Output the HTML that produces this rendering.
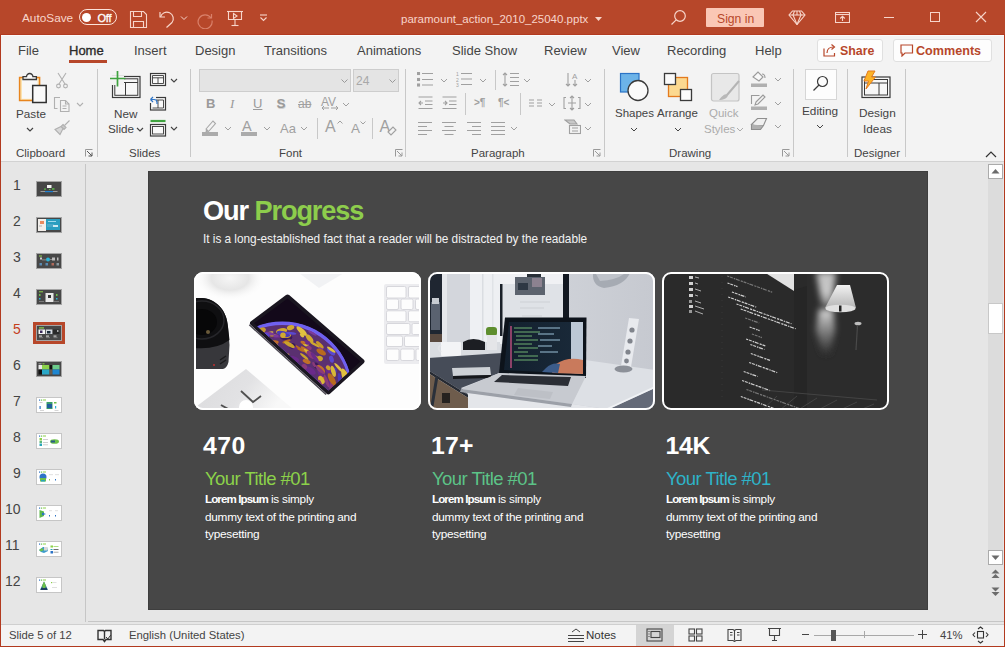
<!DOCTYPE html>
<html><head><meta charset="utf-8">
<style>
*{margin:0;padding:0;box-sizing:border-box}
html,body{width:1005px;height:647px;overflow:hidden;background:#E6E6E6;font-family:"Liberation Sans",sans-serif}
.a{position:absolute}
.t{position:absolute;white-space:nowrap;line-height:1}
#title{left:0;top:0;width:1005px;height:35px;background:#B7472A;border-bottom:1px solid #B23A1F}
#tabs{left:1px;top:35px;width:1003px;height:127px;background:#F3F3F3;border-top:1px solid #FBFBFB}
#ribline{left:1px;top:161px;width:1003px;height:1px;background:#D2D2D2}
.bl{left:0;top:34px;width:1px;height:613px;background:#B23A1F}
.br{left:1004px;top:34px;width:1px;height:613px;background:#B23A1F}
.bb{left:0;top:646px;width:1005px;height:1px;background:#B23A1F}
.tab{font-size:13px;color:#444;top:44px}
.grp{font-size:11.5px;color:#444;top:148px}
.lbl{font-size:12px;color:#444}
.sep{width:1px;background:#C8C8C8;top:69px;height:88px}
.num{font-size:14px;color:#444;left:0;width:22px;text-align:center}
.th{left:37px;width:25px;height:15px;border:1px solid #BDBDBD;background:#fff}
</style></head><body>
<div class="a" id="title"></div>
<div class="a" id="tabs"></div>
<div class="a" id="ribline"></div>


<!-- tabs -->
<div class="t tab" style="left:18px">File</div>
<div class="t tab" style="left:69px;color:#2B2B2B;-webkit-text-stroke:0.35px #2B2B2B">Home</div>
<div class="a" style="left:69px;top:60px;width:38px;height:3px;background:#B7472A"></div>
<div class="t tab" style="left:134px">Insert</div>
<div class="t tab" style="left:195px">Design</div>
<div class="t tab" style="left:264px">Transitions</div>
<div class="t tab" style="left:357px">Animations</div>
<div class="t tab" style="left:452px">Slide Show</div>
<div class="t tab" style="left:544px">Review</div>
<div class="t tab" style="left:612px">View</div>
<div class="t tab" style="left:667px">Recording</div>
<div class="t tab" style="left:755px">Help</div>
<div class="a" style="left:817px;top:39px;width:66px;height:23px;background:#FDFDFD;border:1px solid #E0E0E0;border-radius:3px"></div>
<svg class="a" style="left:823px;top:43px" width="14" height="14" viewBox="0 0 14 14" fill="none" stroke="#B7472A" stroke-width="1.2">
 <path d="M1 5.5v7.5h10.5v-3"/><path d="M4 10c0-4 3-6 6.5-6"/><path d="M8.5 1.5l3 2.5-3 2.5"/>
</svg>
<div class="t" style="left:840px;top:45px;font-size:12.4px;font-weight:bold;color:#B7472A">Share</div>
<div class="a" style="left:893px;top:39px;width:99px;height:23px;background:#FDFDFD;border:1px solid #E0E0E0;border-radius:3px"></div>
<svg class="a" style="left:900px;top:44px" width="14" height="13" viewBox="0 0 14 13" fill="none" stroke="#B7472A" stroke-width="1.2">
 <path d="M1 1h11.5v8h-7.5l-3 3v-3h-1z"/>
</svg>
<div class="t" style="left:916px;top:45px;font-size:12.6px;font-weight:bold;color:#B7472A">Comments</div>


<!-- ribbon -->
<!-- Clipboard -->
<svg class="a" style="left:17px;top:71px" width="32" height="34" viewBox="0 0 32 34">
 <rect x="2.6" y="6.5" width="20" height="23" fill="#FBE3B1" stroke="#E8851E" stroke-width="1.5"/>
 <rect x="5" y="8.2" width="15.6" height="19.6" fill="#F8F8F8"/>
 <path d="M6 8.5v-2.8h3.5a3.2 3.2 0 0 1 6.4 0h3.5v2.8z" fill="#FAFAFA" stroke="#3A3A3A" stroke-width="1.3"/>
 <rect x="15.7" y="14.5" width="13.5" height="17" fill="#FAFAFA" stroke="#303030" stroke-width="1.5"/>
</svg>
<div class="t lbl" style="left:16px;top:108px;font-size:11.7px">Paste</div>
<svg class="a" style="left:26px;top:127px" width="8" height="5" viewBox="0 0 8 5" fill="none" stroke="#444" stroke-width="1.2"><path d="M1 1l3 3 3-3"/></svg>
<svg class="a" style="left:56px;top:72px" width="12" height="17" viewBox="0 0 12 17" fill="none" stroke="#B0B0B0" stroke-width="1.1">
 <path d="M2 1l7 11M10 1L3 12"/><circle cx="2.5" cy="14" r="1.9"/><circle cx="9.5" cy="14" r="1.9"/>
</svg>
<svg class="a" style="left:53px;top:95px" width="18" height="18" viewBox="0 0 18 18" fill="none" stroke="#B0B0B0" stroke-width="1.1">
 <path d="M7 2.5H4.5l-3 0v11h3"/><path d="M7.5 5.5h5l3.5 3.5v7.5h-8.5z"/><path d="M12.5 5.5v3.5h3.5"/><path d="M9.5 11h4M9.5 13.5h4"/>
</svg>
<svg class="a" style="left:76px;top:102px" width="8" height="5" viewBox="0 0 8 5" fill="none" stroke="#B0B0B0" stroke-width="1.1"><path d="M1 1l3 3 3-3"/></svg>
<svg class="a" style="left:54px;top:119px" width="17" height="17" viewBox="0 0 17 17" fill="none" stroke="#B0B0B0" stroke-width="1.1">
 <path d="M15.5 1.5l-5 5"/><path d="M9 5.5l3 3-2 2-3-3z" fill="#C8C8C8"/><path d="M7 7.5L1 10.5l5 5 3-6z" fill="#D8D8D8"/>
</svg>
<div class="t grp" style="left:16px">Clipboard</div>
<svg class="a" style="left:85px;top:149px" width="8" height="8" viewBox="0 0 8 8" fill="none" stroke="#555" stroke-width="1"><path d="M0.5 7.5V0.5M0.5 0.5H7.5" stroke="#999"/><path d="M2 2l5 5M3.5 7H7V3.5"/></svg>
<div class="a sep" style="left:97px"></div>

<!-- Slides -->
<svg class="a" style="left:109px;top:70px" width="34" height="30" viewBox="0 0 34 30">
 <rect x="3.5" y="6.5" width="27.5" height="21" fill="#F7F7F7" stroke="#3A3A3A" stroke-width="1.2"/>
 <rect x="5.8" y="8.8" width="23" height="16.5" fill="none" stroke="#3A3A3A" stroke-width="1"/>
 <path d="M5.8 12.5h23M16.5 12.5v12.8" stroke="#3A3A3A" stroke-width="1"/>
 <rect x="1" y="6" width="14" height="9" fill="#F3F3F3"/>
 <path d="M8.5 1v15.5M1 8.5h15.5" stroke="#3FA33F" stroke-width="1.7"/>
</svg>
<div class="t lbl" style="left:114px;top:108px;font-size:11.7px">New</div>
<div class="t lbl" style="left:108px;top:123px;font-size:11.7px">Slide</div>
<svg class="a" style="left:136px;top:127px" width="8" height="5" viewBox="0 0 8 5" fill="none" stroke="#444" stroke-width="1.2"><path d="M1 1l3 3 3-3"/></svg>
<svg class="a" style="left:149px;top:72px" width="18" height="15" viewBox="0 0 18 15" fill="none" stroke="#3A3A3A" stroke-width="1.2">
 <rect x="1.5" y="1.5" width="15" height="12" fill="#FAFAFA"/><path d="M3.5 3.5h11v8h-11zM3.5 5.8h11M9 5.8v5.7" stroke-width="0.9"/>
</svg>
<svg class="a" style="left:170px;top:78px" width="8" height="5" viewBox="0 0 8 5" fill="none" stroke="#444" stroke-width="1.1"><path d="M1 1l3 3 3-3"/></svg>
<svg class="a" style="left:149px;top:95px" width="18" height="16" viewBox="0 0 18 16" fill="none" stroke="#3A3A3A" stroke-width="1.2">
 <rect x="1.5" y="2.5" width="15" height="12.5" fill="#FAFAFA"/><path d="M3.5 5h11M3.5 13h11M9 5v8M14.5 5v8" stroke-width="0.9"/>
 <rect x="0" y="0" width="7" height="8" fill="#F3F3F3" stroke="none"/>
 <path d="M1.5 4.5l2.5-2.5M1.5 4.5l2.5 2.5M1.5 4.5H5a3 3 0 0 1 3 3v1.5" stroke="#2E75C8" stroke-width="1.2"/>
</svg>
<svg class="a" style="left:149px;top:119px" width="18" height="18" viewBox="0 0 18 18" fill="none" stroke="#3A3A3A" stroke-width="1.2">
 <path d="M1.5 2h15" stroke="#3FA33F" stroke-width="2.2"/>
 <rect x="1.5" y="5.5" width="15" height="11.5" fill="#FAFAFA"/><rect x="3.5" y="7.5" width="11" height="7.5" stroke-width="0.9"/>
</svg>
<svg class="a" style="left:170px;top:126px" width="8" height="5" viewBox="0 0 8 5" fill="none" stroke="#444" stroke-width="1.1"><path d="M1 1l3 3 3-3"/></svg>
<div class="t grp" style="left:129px">Slides</div>
<div class="a sep" style="left:190px"></div>

<!-- Font -->
<div class="a" style="left:199px;top:69px;width:152px;height:23px;background:#E4E4E4;border:1px solid #CDCDCD"></div>
<svg class="a" style="left:341px;top:79px" width="7" height="5" viewBox="0 0 7 5" fill="none" stroke="#999" stroke-width="1"><path d="M0.5 0.5l3 3 3-3"/></svg>
<div class="a" style="left:353px;top:69px;width:46px;height:23px;background:#E4E4E4;border:1px solid #CDCDCD"></div>
<div class="t" style="left:356px;top:75px;font-size:12px;color:#A8A8A8">24</div>
<svg class="a" style="left:389px;top:79px" width="7" height="5" viewBox="0 0 7 5" fill="none" stroke="#999" stroke-width="1"><path d="M0.5 0.5l3 3 3-3"/></svg>
<div class="t" style="left:206px;top:97px;font-size:13px;font-weight:bold;color:#9A9A9A">B</div>
<div class="t" style="left:230px;top:97px;font-size:13px;font-style:italic;color:#9A9A9A;font-family:'Liberation Serif'">I</div>
<div class="t" style="left:253px;top:97px;font-size:13px;color:#9A9A9A;text-decoration:underline">U</div>
<div class="t" style="left:276.5px;top:97px;font-size:13.5px;font-weight:bold;color:#9A9A9A;text-shadow:0.6px 1px 0 #CFCFCF">S</div>
<div class="t" style="left:298px;top:98px;font-size:12px;color:#A0A0A0;text-decoration:line-through">ab</div>
<div class="t" style="left:321px;top:95.5px;font-size:12px;color:#A0A0A0">AV</div>
<svg class="a" style="left:321px;top:105px" width="18" height="6" viewBox="0 0 18 6" fill="none" stroke="#A0A0A0" stroke-width="1"><path d="M1 3h7M3 1L1 3l2 2M10 3h7M15 1l2 2-2 2"/></svg>
<svg class="a" style="left:342px;top:102px" width="8" height="5" viewBox="0 0 8 5" fill="none" stroke="#A0A0A0" stroke-width="1"><path d="M1 1l3 3 3-3"/></svg>
<svg class="a" style="left:201px;top:118px" width="18" height="19" viewBox="0 0 18 19">
 <path d="M5 11l7-8 2.5 2.5-7 8z" fill="none" stroke="#A8A8A8" stroke-width="1.1"/><path d="M5 11l2.5 2.5-3 1z" fill="#A8A8A8"/>
 <rect x="1" y="14" width="16" height="4" fill="#ABABAB"/>
</svg>
<svg class="a" style="left:224px;top:126px" width="8" height="5" viewBox="0 0 8 5" fill="none" stroke="#A0A0A0" stroke-width="1"><path d="M1 1l3 3 3-3"/></svg>
<div class="t" style="left:242px;top:118.5px;font-size:14.5px;color:#A0A0A0">A</div>
<div class="a" style="left:241px;top:132px;width:16px;height:4px;background:#ABABAB"></div>
<svg class="a" style="left:263px;top:126px" width="8" height="5" viewBox="0 0 8 5" fill="none" stroke="#A0A0A0" stroke-width="1"><path d="M1 1l3 3 3-3"/></svg>
<div class="t" style="left:280px;top:121.5px;font-size:13px;color:#A0A0A0">Aa</div>
<svg class="a" style="left:300px;top:126px" width="8" height="5" viewBox="0 0 8 5" fill="none" stroke="#A0A0A0" stroke-width="1"><path d="M1 1l3 3 3-3"/></svg>
<div class="a" style="left:317px;top:118px;width:1px;height:21px;background:#C8C8C8"></div>
<div class="t" style="left:325px;top:119px;font-size:16px;color:#A0A0A0">A</div>
<svg class="a" style="left:337px;top:120px" width="6" height="4" viewBox="0 0 6 4" fill="none" stroke="#A0A0A0" stroke-width="1"><path d="M0.5 3.5l2.5-2.5 2.5 2.5"/></svg>
<div class="t" style="left:351px;top:121.5px;font-size:13.5px;color:#A0A0A0">A</div>
<svg class="a" style="left:360px;top:120.5px" width="6" height="4" viewBox="0 0 6 4" fill="none" stroke="#A0A0A0" stroke-width="1"><path d="M0.5 0.5l2.5 2.5 2.5-2.5"/></svg>
<div class="a" style="left:372px;top:118px;width:1px;height:21px;background:#C8C8C8"></div>
<div class="t" style="left:379.5px;top:119px;font-size:16px;color:#A0A0A0">A</div>
<svg class="a" style="left:387px;top:126px" width="10" height="10" viewBox="0 0 10 10" fill="#F3F3F3" stroke="#A0A0A0" stroke-width="1.1"><path d="M1 6l5-5 3 3-5 5z"/></svg>
<div class="t grp" style="left:279px">Font</div>
<svg class="a" style="left:395px;top:149px" width="8" height="8" viewBox="0 0 8 8" fill="none" stroke="#999" stroke-width="1"><path d="M0.5 7.5V0.5M0.5 0.5H7.5"/><path d="M2 2l5 5M3.5 7H7V3.5"/></svg>
<div class="a sep" style="left:405px"></div>

<!-- Paragraph -->
<svg class="a" style="left:417px;top:72px" width="17" height="15" viewBox="0 0 17 15" fill="none" stroke="#A0A0A0" stroke-width="1.1"><rect x="0.5" y="0.5" width="2" height="2" fill="#A0A0A0"/><rect x="0.5" y="6.5" width="2" height="2" fill="#A0A0A0"/><rect x="0.5" y="12" width="2" height="2" fill="#A0A0A0"/><path d="M5 1.5h11M5 7.5h11M5 13h11"/></svg>
<svg class="a" style="left:440px;top:78px" width="8" height="5" viewBox="0 0 8 5" fill="none" stroke="#A0A0A0" stroke-width="1"><path d="M1 1l3 3 3-3"/></svg>
<svg class="a" style="left:456px;top:71px" width="17" height="16" viewBox="0 0 17 16" fill="none" stroke="#A0A0A0" stroke-width="1.1"><path d="M5 2.5h11M5 8h11M5 13.5h11"/><text x="0" y="5" font-size="5" fill="#A0A0A0" stroke="none" font-family="Liberation Sans">1</text><text x="0" y="10.5" font-size="5" fill="#A0A0A0" stroke="none" font-family="Liberation Sans">2</text><text x="0" y="16" font-size="5" fill="#A0A0A0" stroke="none" font-family="Liberation Sans">3</text></svg>
<svg class="a" style="left:479px;top:78px" width="8" height="5" viewBox="0 0 8 5" fill="none" stroke="#A0A0A0" stroke-width="1"><path d="M1 1l3 3 3-3"/></svg>
<div class="a" style="left:495px;top:70px;width:1px;height:20px;background:#C8C8C8"></div>
<svg class="a" style="left:502px;top:72px" width="18" height="15" viewBox="0 0 18 15" fill="none" stroke="#A0A0A0" stroke-width="1.1"><path d="M3 1v13M1 3l2-2 2 2M1 12l2 2 2-2M8 1.5h9M8 5.5h9M8 9.5h9M8 13.5h9"/></svg>
<svg class="a" style="left:523px;top:78px" width="8" height="5" viewBox="0 0 8 5" fill="none" stroke="#A0A0A0" stroke-width="1"><path d="M1 1l3 3 3-3"/></svg>
<svg class="a" style="left:565px;top:71px" width="15" height="16" viewBox="0 0 15 16" fill="none" stroke="#A0A0A0" stroke-width="1.1"><path d="M3 2v13M1 13l2 2 2-2M10 9v6M8 13l2 2 2-2"/><text x="7" y="7.5" font-size="8" fill="#A0A0A0" stroke="none" font-family="Liberation Sans">A</text></svg>
<svg class="a" style="left:584px;top:78px" width="8" height="5" viewBox="0 0 8 5" fill="none" stroke="#A0A0A0" stroke-width="1"><path d="M1 1l3 3 3-3"/></svg>
<svg class="a" style="left:418px;top:96px" width="15" height="14" viewBox="0 0 15 14" fill="none" stroke="#A0A0A0" stroke-width="1.1"><path d="M0.5 1h14M7 5h7.5M7 8.5h7.5M0.5 12.5h14M5 7H1M3 5L1 7l2 2"/></svg>
<svg class="a" style="left:442px;top:96px" width="15" height="14" viewBox="0 0 15 14" fill="none" stroke="#A0A0A0" stroke-width="1.1"><path d="M0.5 1h14M7 5h7.5M7 8.5h7.5M0.5 12.5h14M1 7h4M3 5l2 2-2 2"/></svg>
<div class="a" style="left:465px;top:93px;width:1px;height:22px;background:#C8C8C8"></div>
<div class="t" style="left:474px;top:98px;font-size:10px;color:#A0A0A0;font-weight:bold">&gt;&para;</div>
<div class="t" style="left:498px;top:98px;font-size:10px;color:#A0A0A0;font-weight:bold">&para;&lt;</div>
<div class="a" style="left:520px;top:93px;width:1px;height:22px;background:#C8C8C8"></div>
<svg class="a" style="left:529px;top:99px" width="14" height="8" viewBox="0 0 14 8" fill="none" stroke="#A0A0A0" stroke-width="1.1"><path d="M0 1h5M0 4h5M0 7h5M8 1h5M8 4h5M8 7h5"/></svg>
<svg class="a" style="left:548px;top:102px" width="8" height="5" viewBox="0 0 8 5" fill="none" stroke="#A0A0A0" stroke-width="1"><path d="M1 1l3 3 3-3"/></svg>
<svg class="a" style="left:563px;top:95px" width="18" height="16" viewBox="0 0 18 16" fill="none" stroke="#A0A0A0" stroke-width="1.1"><path d="M3 2.5H1v11h2M15 2.5h2v11h-2M9 1v14M7 3l2-2 2 2M7 13l2 2 2-2M5 8h8"/></svg>
<svg class="a" style="left:584px;top:102px" width="8" height="5" viewBox="0 0 8 5" fill="none" stroke="#A0A0A0" stroke-width="1"><path d="M1 1l3 3 3-3"/></svg>
<svg class="a" style="left:418px;top:121px" width="15" height="15" viewBox="0 0 15 15" fill="none" stroke="#A0A0A0" stroke-width="1.1"><path d="M0 1.5H14M0 5.5H9M0 9.5H14M0 13.5H9"/></svg>
<svg class="a" style="left:442px;top:121px" width="15" height="15" viewBox="0 0 15 15" fill="none" stroke="#A0A0A0" stroke-width="1.1"><path d="M0 1.5H14M2.5 5.5H11.5M0 9.5H14M2.5 13.5H11.5"/></svg>
<svg class="a" style="left:467px;top:121px" width="15" height="15" viewBox="0 0 15 15" fill="none" stroke="#A0A0A0" stroke-width="1.1"><path d="M0 1.5H14M5 5.5H14M0 9.5H14M5 13.5H14"/></svg>
<svg class="a" style="left:491px;top:121px" width="15" height="15" viewBox="0 0 15 15" fill="none" stroke="#A0A0A0" stroke-width="1.1"><path d="M0 1.5H14M0 5.5H14M0 9.5H14M0 13.5H14"/></svg>
<svg class="a" style="left:510px;top:126px" width="8" height="5" viewBox="0 0 8 5" fill="none" stroke="#A0A0A0" stroke-width="1"><path d="M1 1l3 3 3-3"/></svg>
<svg class="a" style="left:564px;top:119px" width="17" height="16" viewBox="0 0 17 16" fill="none" stroke="#A0A0A0" stroke-width="1.1"><path d="M1 1h9l3 4H6z" fill="#C8C8C8"/><rect x="5.5" y="6.5" width="11" height="8" fill="#F3F3F3"/><path d="M8 9h6M8 12h6"/></svg>
<svg class="a" style="left:584px;top:126px" width="8" height="5" viewBox="0 0 8 5" fill="none" stroke="#A0A0A0" stroke-width="1"><path d="M1 1l3 3 3-3"/></svg>
<div class="t grp" style="left:471px">Paragraph</div>
<svg class="a" style="left:593px;top:149px" width="8" height="8" viewBox="0 0 8 8" fill="none" stroke="#999" stroke-width="1"><path d="M0.5 7.5V0.5M0.5 0.5H7.5"/><path d="M2 2l5 5M3.5 7H7V3.5"/></svg>
<div class="a sep" style="left:604px"></div>
<!-- Drawing -->
<svg class="a" style="left:618px;top:71px" width="34" height="32" viewBox="0 0 34 32"><rect x="2.5" y="2.5" width="18.5" height="18.5" fill="#6CB3E8" stroke="#2B73C6" stroke-width="1.2"/><circle cx="20" cy="19.5" r="10" fill="#FAFAFA" stroke="#3A3A3A" stroke-width="1.3"/></svg>
<div class="t lbl" style="left:615px;top:108px;font-size:11.5px">Shapes</div>
<svg class="a" style="left:630px;top:127px" width="8" height="5" viewBox="0 0 8 5" fill="none" stroke="#444" stroke-width="1"><path d="M1 1l3 3 3-3"/></svg>
<svg class="a" style="left:662px;top:71px" width="32" height="32" viewBox="0 0 32 32"><rect x="6.5" y="6.5" width="19" height="19" fill="#FCD990" stroke="#E47A1E" stroke-width="1.3"/><rect x="2.5" y="2.5" width="11" height="11" fill="#FAFAFA" stroke="#3A3A3A" stroke-width="1.3"/><rect x="18.5" y="18.5" width="11" height="11" fill="#FAFAFA" stroke="#3A3A3A" stroke-width="1.3"/></svg>
<div class="t lbl" style="left:657px;top:108px;font-size:11.5px">Arrange</div>
<svg class="a" style="left:674px;top:127px" width="8" height="5" viewBox="0 0 8 5" fill="none" stroke="#444" stroke-width="1"><path d="M1 1l3 3 3-3"/></svg>
<svg class="a" style="left:709px;top:71px" width="34" height="32" viewBox="0 0 34 32"><rect x="2.5" y="2.5" width="27.5" height="27.5" rx="2" fill="#E8E8E8" stroke="#C4C4C4" stroke-width="1.2"/><path d="M30 10L18 24" stroke="#B4B4B4" stroke-width="2"/><path d="M18 23c-3 0-6 3-8 6 4 0 9-2 9-5z" fill="#B8B8B8"/></svg>
<div class="t lbl" style="left:709px;top:108px;font-size:11.5px;color:#ABABAB">Quick</div>
<div class="t lbl" style="left:704px;top:124px;font-size:11.5px;color:#ABABAB">Styles</div>
<svg class="a" style="left:736px;top:127px" width="8" height="5" viewBox="0 0 8 5" fill="none" stroke="#ABABAB" stroke-width="1"><path d="M1 1l3 3 3-3"/></svg>
<svg class="a" style="left:750px;top:70px" width="18" height="18" viewBox="0 0 18 18" fill="none" stroke="#9A9A9A" stroke-width="1.1"><path d="M3 7l5-5 5 5-4 4z" fill="#F8F8F8"/><path d="M12 4c2 0 3 2 3 4"/><rect x="1" y="13.5" width="16" height="3.5" fill="#B0B0B0" stroke="none"/></svg>
<svg class="a" style="left:774px;top:77px" width="8" height="5" viewBox="0 0 8 5" fill="none" stroke="#A0A0A0" stroke-width="1"><path d="M1 1l3 3 3-3"/></svg>
<svg class="a" style="left:750px;top:93px" width="18" height="18" viewBox="0 0 18 18" fill="none" stroke="#9A9A9A" stroke-width="1.1"><path d="M1.5 11V2.5h8"/><path d="M6 9l7-7 2 2-7 7-3 1z"/><rect x="1" y="13.5" width="16" height="3.5" fill="#B0B0B0" stroke="none"/></svg>
<svg class="a" style="left:774px;top:101px" width="8" height="5" viewBox="0 0 8 5" fill="none" stroke="#A0A0A0" stroke-width="1"><path d="M1 1l3 3 3-3"/></svg>
<svg class="a" style="left:750px;top:117px" width="18" height="15" viewBox="0 0 18 15" fill="none" stroke="#8E8E8E" stroke-width="1.1"><path d="M1.5 7.5l6-6h9l-3 7h-9z" fill="#F0F0F0"/><path d="M1.5 7.5v5h9l3-4" fill="#B0B0B0"/></svg>
<svg class="a" style="left:774px;top:124px" width="8" height="5" viewBox="0 0 8 5" fill="none" stroke="#A0A0A0" stroke-width="1"><path d="M1 1l3 3 3-3"/></svg>
<div class="t grp" style="left:669px">Drawing</div>
<svg class="a" style="left:782px;top:149px" width="8" height="8" viewBox="0 0 8 8" fill="none" stroke="#999" stroke-width="1"><path d="M0.5 7.5V0.5M0.5 0.5H7.5"/><path d="M2 2l5 5M3.5 7H7V3.5"/></svg>
<div class="a sep" style="left:793px"></div>
<!-- Editing -->
<div class="a" style="left:805px;top:69px;width:32px;height:31px;background:#FDFDFD;border:1px solid #D6D6D6"></div>
<svg class="a" style="left:812px;top:75px" width="18" height="18" viewBox="0 0 18 18" fill="none" stroke="#3A3A3A" stroke-width="1.2"><circle cx="10.5" cy="6.5" r="5"/><path d="M7 10l-5.5 5.5"/></svg>
<div class="t lbl" style="left:802px;top:106px;font-size:11.8px">Editing</div>
<svg class="a" style="left:816px;top:124px" width="8" height="5" viewBox="0 0 8 5" fill="none" stroke="#444" stroke-width="1"><path d="M1 1l3 3 3-3"/></svg>
<div class="a sep" style="left:847px"></div>
<svg class="a" style="left:859px;top:70px" width="34" height="30" viewBox="0 0 34 30"><rect x="3" y="7" width="28" height="20.5" fill="#F7F7F7" stroke="#3A3A3A" stroke-width="1.2"/><rect x="5.5" y="9.5" width="23" height="15.5" fill="none" stroke="#3A3A3A" stroke-width="1"/><path d="M5.5 13h23M20 13v12" stroke="#3A3A3A" stroke-width="1"/><path d="M9 1h7l-3.5 6h4L7 19l2.5-8H5z" fill="#FCB326" stroke="#E47A1E" stroke-width="1"/></svg>
<div class="t lbl" style="left:859px;top:108px;font-size:11.8px">Design</div>
<div class="t lbl" style="left:863px;top:124px;font-size:11.8px">Ideas</div>
<div class="t grp" style="left:854px">Designer</div>
<div class="a sep" style="left:905px"></div>
<svg class="a" style="left:985px;top:151px" width="12" height="7" viewBox="0 0 12 7" fill="none" stroke="#333" stroke-width="1.2"><path d="M1 6l5-5 5 5"/></svg>

<!-- title bar content -->
<div class="t" style="left:22px;top:12.8px;font-size:11.8px;color:#F7D5CA">AutoSave</div>
<div class="a" style="left:79px;top:9px;width:38px;height:16px;border:1.3px solid #FBE3DB;border-radius:8px"></div>
<div class="a" style="left:82px;top:12.5px;width:9px;height:9px;border-radius:50%;background:#fff"></div>
<div class="t" style="left:97.5px;top:13px;font-size:11px;color:#fff;letter-spacing:-0.2px;-webkit-text-stroke:0.3px #fff">Off</div>
<svg class="a" style="left:129px;top:10px" width="19" height="19" viewBox="0 0 19 19" fill="none" stroke="#F7D5CA" stroke-width="1.1">
 <path d="M1.5 1.5h13l3 3v13h-16z"/><path d="M4.5 1.5v5h8v-5"/><path d="M4.5 17.5v-6h10v6"/>
</svg>
<svg class="a" style="left:158px;top:10px" width="30" height="19" viewBox="0 0 30 19" fill="none" stroke="#F7D5CA" stroke-width="1.2">
 <path d="M2 2v5h5"/><path d="M2.5 7A6.5 6.5 0 1 1 14 12.5L8.5 17.5"/><path d="M23 6.5l3 3 3-3" stroke-width="1"/>
</svg>
<svg class="a" style="left:196px;top:11px" width="19" height="18" viewBox="0 0 19 18" fill="none" stroke="#D9806A" stroke-width="1.2">
 <path d="M15.5 3v4h-4"/><path d="M15 7A7 7 0 1 0 16 9.5"/>
</svg>
<svg class="a" style="left:226px;top:10px" width="18" height="17" viewBox="0 0 18 17" fill="none" stroke="#F7D5CA" stroke-width="1.1">
 <path d="M1 1.5h16"/><path d="M2.5 1.5v8h13v-8"/><path d="M9 9.5v6"/><path d="M5.5 15.5h7"/><path d="M7.5 3.5l3.5 2.5-3.5 2.5z"/>
</svg>
<svg class="a" style="left:259px;top:13px" width="9" height="9" viewBox="0 0 9 9" fill="none" stroke="#F7D5CA" stroke-width="1.1">
 <path d="M1 2h7"/><path d="M1.5 4.5l3 3 3-3"/>
</svg>
<div class="t" style="left:401px;top:13.5px;font-size:11.5px;color:#F7D5CA">paramount_action_2010_25040.pptx</div>
<svg class="a" style="left:595px;top:17px" width="7" height="5" viewBox="0 0 7 5"><path d="M0 0h7l-3.5 4z" fill="#F7D5CA"/></svg>
<svg class="a" style="left:670px;top:9px" width="17" height="17" viewBox="0 0 17 17" fill="none" stroke="#F7D5CA" stroke-width="1.2">
 <circle cx="10" cy="7" r="5.3"/><path d="M6.2 10.8L1.5 15.5"/>
</svg>
<div class="a" style="left:706px;top:8px;width:58px;height:19px;background:#FAC7B5;border-radius:1px"></div>
<div class="t" style="left:717px;top:13px;font-size:12.2px;color:#B7472A">Sign in</div>
<svg class="a" style="left:788px;top:10px" width="18" height="15" viewBox="0 0 18 15" fill="none" stroke="#F7D5CA" stroke-width="1.1">
 <path d="M4.5 1h9l3.5 4-8 9.5-8-9.5z"/><path d="M1 5h16"/><path d="M6.5 1l-1.5 4 4 9.5 4-9.5-1.5-4"/><path d="M9 1v4"/>
</svg>
<svg class="a" style="left:835px;top:12px" width="15" height="11" viewBox="0 0 15 11" fill="none" stroke="#F7D5CA" stroke-width="1.1">
 <path d="M0.5 0.5h14v10h-14z"/><path d="M0.5 2.5h14"/><path d="M7.5 9V4.5M5.2 6.5l2.3-2.2 2.3 2.2"/>
</svg>
<div class="a" style="left:884px;top:17px;width:10px;height:1px;background:#F7D5CA"></div>
<div class="a" style="left:930px;top:12px;width:10px;height:10px;border:1px solid #F7D5CA"></div>
<svg class="a" style="left:975px;top:11px" width="12" height="12" viewBox="0 0 12 12" fill="none" stroke="#F7D5CA" stroke-width="1.1">
 <path d="M1 1l10 10M11 1L1 11"/>
</svg>


<!-- status bar -->
<div class="a" style="left:1px;top:624px;width:1003px;height:1px;background:#CFCFCF"></div>
<div class="a" style="left:1px;top:625px;width:1003px;height:21px;background:#F3F3F3"></div>

<!-- main -->
<div class="a" style="left:85px;top:164px;width:1px;height:458px;background:#C6C6C6"></div>
<div class="a" style="left:88px;top:621px;width:916px;height:1px;background:#C6C6C6"></div>
<div class="t" style="left:13px;top:178.0px;font-size:14px;color:#444">1</div>
<div class="t" style="left:13px;top:214.0px;font-size:14px;color:#444">2</div>
<div class="t" style="left:13px;top:250.0px;font-size:14px;color:#444">3</div>
<div class="t" style="left:13px;top:286.0px;font-size:14px;color:#444">4</div>
<div class="t" style="left:13px;top:322.0px;font-size:14px;color:#C43E1C">5</div>
<div class="t" style="left:13px;top:358.0px;font-size:14px;color:#444">6</div>
<div class="t" style="left:13px;top:394.0px;font-size:14px;color:#444">7</div>
<div class="t" style="left:13px;top:430.0px;font-size:14px;color:#444">8</div>
<div class="t" style="left:13px;top:466.0px;font-size:14px;color:#444">9</div>
<div class="t" style="left:5px;top:502.0px;font-size:14px;color:#444">10</div>
<div class="t" style="left:5px;top:538.0px;font-size:14px;color:#444">11</div>
<div class="t" style="left:5px;top:574.0px;font-size:14px;color:#444">12</div>
<svg class="a" style="left:37px;top:182px;outline:1px solid #A4A4A4;outline-offset:0" width="24" height="14" viewBox="0 0 24 14"><rect width="24" height="14" fill="#474747"/><rect x="10" y="3" width="4.5" height="3" fill="#F4F4F4"/><rect x="7" y="6.5" width="2" height="1.2" fill="#5DB94A"/><rect x="12" y="7" width="1.5" height="1" fill="#5DB94A"/><rect x="15" y="6.2" width="2.5" height="1.5" fill="#5DB94A"/><rect x="3.5" y="9" width="17" height="1" fill="#9A9A9A"/><rect x="8" y="9" width="8" height="1.2" fill="#1E7FD0"/></svg>
<svg class="a" style="left:37px;top:218px;outline:1px solid #A4A4A4;outline-offset:0" width="24" height="14" viewBox="0 0 24 14"><rect width="24" height="14" fill="#474747"/><rect x="1" y="1" width="8" height="12" fill="#F2EEEA"/><rect x="3" y="3" width="4" height="3" fill="#E88A60"/><rect x="2" y="7" width="3" height="2" fill="#D0D0D0"/><rect x="9" y="1" width="14" height="11" fill="#2A9EC0"/><rect x="11" y="3" width="8" height="1" fill="#9FD8EA"/><rect x="10" y="6" width="7" height="3" fill="#4AA8C8"/><rect x="16" y="7" width="5" height="2" fill="#CDEAF2"/></svg>
<svg class="a" style="left:37px;top:254px;outline:1px solid #A4A4A4;outline-offset:0" width="24" height="14" viewBox="0 0 24 14"><rect width="24" height="14" fill="#474747"/><rect x="2" y="1.5" width="3" height="1" fill="#8CD24A"/><rect x="3" y="3.5" width="2" height="2" fill="#CCC"/><rect x="5" y="5.5" width="4" height="0.8" fill="#999"/><circle cx="11" cy="5.5" r="2" fill="#2BB3D6"/><rect x="13" y="5.2" width="4" height="0.8" fill="#999"/><rect x="15" y="3.5" width="3" height="3" fill="#BBB"/><rect x="20" y="3.5" width="1.5" height="3" fill="#BBB"/><rect x="2.5" y="9" width="2.5" height="2.5" fill="#5A8AB0"/><rect x="8.5" y="9" width="2.5" height="2.5" fill="#5A8AB0"/><rect x="14.5" y="9" width="2.5" height="2.5" fill="#B06A5A"/><rect x="19.5" y="9" width="2.5" height="2.5" fill="#8A9AA0"/></svg>
<svg class="a" style="left:37px;top:290px;outline:1px solid #A4A4A4;outline-offset:0" width="24" height="14" viewBox="0 0 24 14"><rect width="24" height="14" fill="#474747"/><rect x="2" y="1.3" width="4" height="1" fill="#8CD24A"/><rect x="8.5" y="3" width="8" height="9" fill="#E8E8E8"/><rect x="11" y="5" width="3" height="3" fill="#333"/><rect x="2" y="4" width="1.5" height="2" fill="#6CC04A"/><rect x="2" y="8" width="1.5" height="1.5" fill="#2BB3D6"/><rect x="19" y="4" width="1.5" height="2" fill="#6CC04A"/><rect x="19" y="8" width="1.5" height="1.5" fill="#2BB3D6"/><rect x="2" y="11" width="5" height="0.8" fill="#888"/><rect x="17" y="11" width="5" height="0.8" fill="#888"/></svg>
<div class="a" style="left:33px;top:322px;width:32px;height:22px;border:3px solid #B7472A;background:#FAFAFA"></div>
<svg class="a" style="left:37px;top:326px;outline:1px solid #A4A4A4;outline-offset:0" width="24" height="14" viewBox="0 0 24 14"><rect width="24" height="14" fill="#474747"/><rect x="2" y="1.3" width="5" height="1.2" fill="#8CD24A"/><rect x="1.5" y="3.5" width="6.5" height="4.5" fill="#F6F6F6"/><rect x="3" y="4.5" width="2.5" height="2.5" fill="#3A2A5A"/><rect x="8.8" y="3.5" width="6.5" height="4.5" fill="#D4D8DE"/><rect x="10" y="5" width="3.5" height="2.5" fill="#1A2A3A"/><rect x="16" y="3.5" width="6.5" height="4.5" fill="#2A2A2A"/><rect x="20" y="4" width="1.5" height="2" fill="#AAA"/><rect x="2" y="9.5" width="3" height="1.2" fill="#CCC"/><rect x="9" y="9.5" width="3" height="1.2" fill="#CCC"/><rect x="16.5" y="9.5" width="3" height="1.2" fill="#CCC"/><rect x="2" y="11.3" width="4" height="0.8" fill="#888"/><rect x="9" y="11.3" width="4" height="0.8" fill="#888"/><rect x="16.5" y="11.3" width="4" height="0.8" fill="#888"/></svg>
<svg class="a" style="left:37px;top:362px;outline:1px solid #A4A4A4;outline-offset:0" width="24" height="14" viewBox="0 0 24 14"><rect width="24" height="14" fill="#474747"/><rect x="1.5" y="1.3" width="3" height="1" fill="#AAA"/><rect x="5.5" y="1.3" width="2" height="1" fill="#8CD24A"/><rect x="1.5" y="3" width="3.5" height="4.5" fill="#E8E8E8"/><rect x="5" y="3" width="7.5" height="4.5" fill="#8CD24A"/><rect x="12.5" y="3" width="3" height="4.5" fill="#111"/><rect x="15.5" y="3" width="7" height="4.5" fill="#6CCB8A"/><rect x="1.5" y="7.5" width="3.5" height="5" fill="#111"/><rect x="5" y="7.5" width="7.5" height="5" fill="#2AA8C8"/><rect x="12.5" y="7.5" width="3" height="5" fill="#6A5A4A"/><rect x="15.5" y="7.5" width="7" height="5" fill="#1E86D0"/></svg>
<svg class="a" style="left:37px;top:398px;outline:1px solid #C6C6C6;outline-offset:0" width="24" height="14" viewBox="0 0 24 14"><rect width="24" height="14" fill="#FFFFFF"/><rect x="2" y="1.5" width="1.2" height="1.2" fill="#2B73C6"/><rect x="4" y="1.5" width="1.2" height="1.2" fill="#6CC04A"/><rect x="6" y="1.5" width="3" height="1" fill="#8CD24A"/><rect x="2.5" y="4" width="3" height="1" fill="#CCC"/><rect x="2.5" y="8" width="1.2" height="3" fill="#2B73C6"/><rect x="3" y="12" width="4" height="0.6" fill="#BBB"/><rect x="9.5" y="4" width="6" height="7" fill="#3A9E6A"/><rect x="10" y="6" width="5" height="4" fill="#1F5E9E"/><rect x="17" y="4" width="2.5" height="1.5" fill="#6CC04A"/><rect x="18" y="8" width="1.2" height="2.5" fill="#2BB3D6"/><rect x="17.5" y="12" width="4" height="0.6" fill="#BBB"/></svg>
<svg class="a" style="left:37px;top:434px;outline:1px solid #C6C6C6;outline-offset:0" width="24" height="14" viewBox="0 0 24 14"><rect width="24" height="14" fill="#FFFFFF"/><rect x="2" y="1.5" width="1.2" height="1.2" fill="#2B73C6"/><rect x="4" y="1.5" width="1.2" height="1.2" fill="#6CC04A"/><rect x="6" y="1.5" width="3" height="1" fill="#8CD24A"/><rect x="2.5" y="4" width="2.5" height="2.5" fill="#8CD24A"/><rect x="2.5" y="7" width="2.5" height="2" fill="#5CB77B"/><rect x="2.5" y="9.5" width="2.5" height="2.5" fill="#2AA5B9"/><rect x="6" y="5" width="5" height="0.7" fill="#BBB"/><rect x="6" y="8" width="5" height="0.7" fill="#BBB"/><rect x="6" y="10.5" width="5" height="0.7" fill="#BBB"/><ellipse cx="17.5" cy="7.5" rx="4.5" ry="2.3" fill="#6CC04A"/><rect x="14" y="6.5" width="4" height="2" fill="#2A5A8A"/></svg>
<svg class="a" style="left:37px;top:470px;outline:1px solid #C6C6C6;outline-offset:0" width="24" height="14" viewBox="0 0 24 14"><rect width="24" height="14" fill="#FFFFFF"/><rect x="2" y="1.5" width="1.2" height="1.2" fill="#2B73C6"/><rect x="4" y="1.5" width="1.2" height="1.2" fill="#6CC04A"/><rect x="6" y="1.5" width="3" height="1" fill="#8CD24A"/><circle cx="6" cy="7" r="3.5" fill="#2B73C6"/><rect x="3" y="8" width="6" height="3.5" fill="#6CC04A"/><rect x="4" y="10" width="4" height="1.5" fill="#2AA5B9"/><rect x="12" y="4.5" width="4" height="0.6" fill="#CCC"/><rect x="18" y="4.5" width="4" height="0.6" fill="#CCC"/><rect x="12" y="9" width="1" height="1.5" fill="#8CD24A"/><rect x="18" y="9" width="1" height="1.5" fill="#2B73C6"/></svg>
<svg class="a" style="left:37px;top:506px;outline:1px solid #C6C6C6;outline-offset:0" width="24" height="14" viewBox="0 0 24 14"><rect width="24" height="14" fill="#FFFFFF"/><rect x="2" y="1.5" width="1.2" height="1.2" fill="#2B73C6"/><rect x="4" y="1.5" width="1.2" height="1.2" fill="#6CC04A"/><rect x="6" y="1.5" width="3" height="1" fill="#8CD24A"/><path d="M2.5 4 L7 5.5 L7 10 L2.5 12 Z" fill="#5DB94A"/><path d="M5 6.5 L9 8 L5 9.5 Z" fill="#2B73C6"/><rect x="12" y="4.5" width="3" height="0.6" fill="#CCC"/><rect x="18" y="4.5" width="3" height="0.6" fill="#CCC"/><rect x="12" y="9" width="1" height="1.5" fill="#2B73C6"/><rect x="18" y="9" width="1" height="1.5" fill="#2B73C6"/></svg>
<svg class="a" style="left:37px;top:542px;outline:1px solid #C6C6C6;outline-offset:0" width="24" height="14" viewBox="0 0 24 14"><rect width="24" height="14" fill="#FFFFFF"/><rect x="2" y="1.5" width="1.2" height="1.2" fill="#2B73C6"/><rect x="4" y="1.5" width="1.2" height="1.2" fill="#6CC04A"/><rect x="6" y="1.5" width="3" height="1" fill="#8CD24A"/><path d="M2 8 L6 5 L10 5 L11 9 L7 11 L4 10 Z" fill="#3C9BCB"/><path d="M2 8 L5 6 L7 8 L4 9.5Z" fill="#6CC04A"/><rect x="7" y="5" width="3.5" height="3.5" fill="#D8D8D8"/><rect x="13.5" y="3.5" width="2.5" height="2" fill="#8CD24A"/><rect x="16.5" y="4" width="5" height="0.7" fill="#8CD24A"/><rect x="13.5" y="7" width="2" height="1" fill="#2AA5B9"/><rect x="16.5" y="7.3" width="5" height="0.7" fill="#333"/><rect x="13.5" y="9" width="2.5" height="2.5" fill="#2B73C6"/><rect x="16.5" y="9.8" width="5" height="0.7" fill="#888"/></svg>
<svg class="a" style="left:37px;top:578px;outline:1px solid #C6C6C6;outline-offset:0" width="24" height="14" viewBox="0 0 24 14"><rect width="24" height="14" fill="#FFFFFF"/><rect x="2" y="1.5" width="1.2" height="1.2" fill="#2B73C6"/><rect x="4" y="1.5" width="1.2" height="1.2" fill="#6CC04A"/><rect x="6" y="1.5" width="3" height="1" fill="#8CD24A"/><path d="M7 3.5 L11 12 L3 12 Z" fill="#2E6F8F"/><path d="M7 3.5 L9 8 L7 12 L5 8Z" fill="#6CC04A"/><rect x="4" y="10" width="6" height="2" fill="#1F3F5F"/><rect x="14" y="4" width="1.2" height="1.2" fill="#8CD24A"/><rect x="15.5" y="4.2" width="4" height="0.6" fill="#CCC"/><rect x="15" y="9" width="5" height="0.6" fill="#CCC"/></svg>
<div class="a" style="left:988px;top:179px;width:15px;height:372px;background:#DCDCDC"></div>
<div class="a" style="left:988px;top:164px;width:15px;height:15px;background:#fff;border:1px solid #ABABAB"></div>
<svg class="a" style="left:991px;top:168px" width="9" height="6" viewBox="0 0 9 6"><path d="M0.5 5.5L4.5 1l4 4.5z" fill="#6B6B6B"/></svg>
<div class="a" style="left:988px;top:303px;width:15px;height:31px;background:#fff;border:1px solid #C8C8C8"></div>
<div class="a" style="left:988px;top:550px;width:15px;height:15px;background:#fff;border:1px solid #ABABAB"></div>
<svg class="a" style="left:991px;top:555px" width="9" height="6" viewBox="0 0 9 6"><path d="M0.5 0.5L4.5 5l4-4.5z" fill="#6B6B6B"/></svg>
<svg class="a" style="left:991px;top:569px" width="9" height="10" viewBox="0 0 9 10"><path d="M0.5 4.5L4.5 0.5l4 4z M0.5 9L4.5 5l4 4z" fill="#6B6B6B"/></svg>
<svg class="a" style="left:991px;top:587px" width="9" height="10" viewBox="0 0 9 10"><path d="M0.5 0.5L4.5 4.5l4-4z M0.5 5L4.5 9l4-4z" fill="#6B6B6B"/></svg>
<!-- status -->
<div class="t" style="left:9px;top:630px;font-size:11.3px;color:#444">Slide 5 of 12</div>
<svg class="a" style="left:97px;top:629px" width="15" height="14" viewBox="0 0 15 14" fill="none" stroke="#333" stroke-width="1.4"><path d="M1 1.5h5.5l1 1 1-1H14v9H9l-1.5 2-1.5-2H1z"/><path d="M7.5 2.5v8"/><path d="M9 8l1.8 2 3-4" stroke-width="1"/></svg>
<div class="t" style="left:129px;top:630px;font-size:11.3px;color:#444">English (United States)</div>
<svg class="a" style="left:567px;top:628px" width="18" height="14" viewBox="0 0 18 14" fill="none" stroke="#444" stroke-width="1"><path d="M5 4l4-3 4 3"/><path d="M1 7.5h16M1 10.5h16M1 13.5h16"/></svg>
<div class="t" style="left:586px;top:630px;font-size:11.5px;color:#333">Notes</div>
<div class="a" style="left:636px;top:625px;width:38px;height:21px;background:#D4D4D4"></div>
<svg class="a" style="left:646px;top:628px" width="17" height="14" viewBox="0 0 17 14" fill="none" stroke="#444" stroke-width="1.1"><rect x="1" y="1" width="15" height="12"/><rect x="5" y="3.5" width="9" height="6"/><path d="M2.5 3.5h1M2.5 6h1M2.5 8.5h1"/></svg>
<svg class="a" style="left:688px;top:628px" width="15" height="14" viewBox="0 0 15 14" fill="none" stroke="#444" stroke-width="1.1"><rect x="1" y="1" width="5.5" height="5"/><rect x="8.5" y="1" width="5.5" height="5"/><rect x="1" y="8" width="5.5" height="5"/><rect x="8.5" y="8" width="5.5" height="5"/></svg>
<svg class="a" style="left:727px;top:628px" width="15" height="14" viewBox="0 0 15 14" fill="none" stroke="#444" stroke-width="1.1"><path d="M1 1.5h5l1.5 1 1.5-1h5v11H9l-1.5 1-1.5-1H1z"/><path d="M7.5 2.5v10M3 4.5h2.5M3 7h2.5M10 4.5h2.5M10 7h2.5"/></svg>
<svg class="a" style="left:767px;top:627px" width="15" height="15" viewBox="0 0 15 15" fill="none" stroke="#444" stroke-width="1.1"><path d="M1 1.5h13M2.5 1.5v7h10v-7M7.5 8.5v5M5 13.5h5"/></svg>
<div class="a" style="left:802px;top:634px;width:7px;height:1px;background:#444"></div>
<div class="a" style="left:814px;top:634.5px;width:100px;height:1px;background:#A8A8A8"></div>
<div class="a" style="left:864px;top:631px;width:1px;height:7px;background:#A8A8A8"></div>
<div class="a" style="left:831px;top:630px;width:5px;height:11px;background:#555"></div>
<div class="a" style="left:918px;top:634px;width:9px;height:1px;background:#444"></div><div class="a" style="left:922px;top:630px;width:1px;height:9px;background:#444"></div>
<div class="t" style="left:940px;top:630px;font-size:11.3px;color:#444">41%</div>
<svg class="a" style="left:972px;top:626px" width="17" height="18" viewBox="0 0 17 18" fill="none" stroke="#333" stroke-width="1.1"><rect x="5.5" y="5.5" width="6" height="6.5"/><path d="M6 3l2.5-2 2.5 2M6 15l2.5 2 2.5-2M3 6.5L1 8.75 3 11M14 6.5l2 2.25-2 2.25"/></svg>

<!-- slide -->
<div class="a" style="left:148px;top:171px;width:780px;height:439px;background:#474747;border:1px solid #3E3E3E"></div>


<!-- slide content -->
<div class="t" style="left:203px;top:197.3px;font-size:27.2px;font-weight:bold;color:#FFFFFF;letter-spacing:-1.12px">Our <span style="color:#8DCD4C">Progress</span></div>
<div class="t" style="left:203px;top:233.5px;font-size:11.85px;color:#F2F2F2;letter-spacing:-0.03px">It is a long-established fact that a reader will be distracted by the readable</div>

<!-- image 1 -->
<svg class="a" style="left:194px;top:272px" width="227" height="138" viewBox="0 0 227 138">
 <defs>
  <clipPath id="c1"><rect x="0" y="0" width="227" height="138" rx="9"/></clipPath>
  <radialGradient id="cup" cx="0.5" cy="0.5" r="0.5"><stop offset="0" stop-color="#F6F6F6"/><stop offset="0.55" stop-color="#E6E6E6"/><stop offset="1" stop-color="#F9F9F9" stop-opacity="0"/></radialGradient>
  <linearGradient id="paper" x1="0" y1="0" x2="1" y2="0.3"><stop offset="0" stop-color="#DADADC"/><stop offset="0.6" stop-color="#E2E2E4"/><stop offset="1" stop-color="#F8F8F8"/></linearGradient>
  <clipPath id="pc"><circle cx="88.3" cy="119.5" r="67.5"/></clipPath>
  <clipPath id="ph"><path d="M93.5 26.5 L166.5 89.4 L134.3 118.5 L60 51.2 Z"/></clipPath>
  <radialGradient id="planet" cx="0.3" cy="0.2" r="0.9"><stop offset="0" stop-color="#B8962E"/><stop offset="0.45" stop-color="#7A4A8A"/><stop offset="1" stop-color="#2A1450"/></radialGradient>
 </defs>
 <g clip-path="url(#c1)">
  <rect width="227" height="138" fill="#FDFDFD"/>
  <ellipse cx="36" cy="6" rx="34" ry="22" fill="url(#cup)"/>
  <path d="M105 1 L125 16 L150 1 Z" fill="#F1F2F4"/>
  <!-- lens -->
  <path d="M0 26 H8 C22 27 33 38 34 55 L35.5 73 L34.5 90 Q33 96 29 97 H0 Z" fill="#37373B"/>
  <path d="M0 26 H8 C22 27 33 38 34 55 L35.5 68 Q22 78 0 76 Z" fill="#0F0F11"/>
  <ellipse cx="8" cy="48" rx="22" ry="19" fill="none" stroke="#26262A" stroke-width="1.5"/>
  <ellipse cx="8" cy="50" rx="15" ry="13" fill="#070708"/>
  <circle cx="14" cy="60" r="2" fill="#6A5A3A"/>
  <path d="M26 88 L32 84 M26 92 L32 88" stroke="#1A1A1C" stroke-width="1.5"/>
  <circle cx="20" cy="93" r="1" fill="#C03030"/>
  <!-- keyboard -->
  <rect x="190" y="12" width="40" height="80" rx="2" fill="#ECECEF"/>
  <g fill="#FDFDFD" stroke="#D4D4D9" stroke-width="0.9">
   <rect x="192.5" y="14.5" width="19.5" height="11.5" rx="1.5"/><rect x="214.5" y="14.5" width="16" height="11.5" rx="1.5"/>
   <rect x="192.5" y="27" width="12" height="10.5" rx="1.5"/><rect x="207" y="27" width="12" height="10.5" rx="1.5"/><rect x="221.5" y="27" width="10" height="10.5" rx="1.5"/>
   <rect x="192.5" y="38.8" width="19.5" height="11" rx="1.5"/><rect x="214.5" y="38.8" width="16" height="11" rx="1.5"/>
   <rect x="192.5" y="51.5" width="23.5" height="11" rx="1.5"/><rect x="218" y="51.5" width="12" height="11" rx="1.5"/>
   <rect x="192.5" y="64" width="16" height="10.5" rx="1.5"/><rect x="210.5" y="64" width="20" height="10.5" rx="1.5"/>
   <rect x="192.5" y="77" width="12.5" height="11.5" rx="1.5"/><rect x="206.7" y="77" width="13.5" height="11.5" rx="1.5"/><rect x="222" y="77" width="9" height="11.5" rx="1.5"/>
  </g>
  <!-- paper -->
  <path d="M52 97 L100 138 L0 138 L3 134 Z" fill="url(#paper)"/>
  <path d="M47 119 L59 130 L67 124" stroke="#505050" stroke-width="1.8" fill="none"/>
  <path d="M27 133 L36 138" stroke="#505050" stroke-width="2" fill="none"/>
  <circle cx="52" cy="135" r="7" fill="#FFFFFF"/>
  <!-- phone -->
  <path d="M93.5 25 L168 89.4 L134.3 119.9 L58.5 51.2 Z" fill="#1A1620" stroke="#1A1620" stroke-width="5" stroke-linejoin="round"/>
  <path d="M57.5 51.2 L134.3 120.9" stroke="#4A4650" stroke-width="1.5" transform="translate(-2.2,1.6)"/>
  <path d="M93.5 26.5 L166.5 89.4 L134.3 118.5 L60 51.2 Z" fill="#13091A"/>
  <g clip-path="url(#ph)">
   <circle cx="88.3" cy="119.5" r="70" fill="#7464F0"/>
   <circle cx="88.3" cy="120.5" r="67.5" fill="#5A3070"/>
   <g clip-path="url(#pc)">
   <ellipse cx="80.1" cy="70.4" rx="4.6" ry="2.1" fill="#C07028" transform="rotate(355 80.1 70.4)"/>
   <ellipse cx="46.0" cy="97.4" rx="5.3" ry="1.5" fill="#3A1A5A" transform="rotate(295 46.0 97.4)"/>
   <ellipse cx="42.1" cy="103.5" rx="5.4" ry="2.3" fill="#3A1A5A" transform="rotate(284 42.1 103.5)"/>
   <ellipse cx="79.1" cy="63.3" rx="3.2" ry="1.2" fill="#C89A2A" transform="rotate(352 79.1 63.3)"/>
   <ellipse cx="58.4" cy="118.0" rx="5.2" ry="2.6" fill="#6A2A8A" transform="rotate(264 58.4 118.0)"/>
   <ellipse cx="97.7" cy="90.6" rx="5.4" ry="2.1" fill="#6A2A8A" transform="rotate(386 97.7 90.6)"/>
   <ellipse cx="83.1" cy="84.2" rx="7.0" ry="2.7" fill="#D8B838" transform="rotate(362 83.1 84.2)"/>
   <ellipse cx="68.8" cy="93.3" rx="2.6" ry="2.2" fill="#B86A1E" transform="rotate(304 68.8 93.3)"/>
   <ellipse cx="52.7" cy="111.7" rx="6.8" ry="2.7" fill="#C9A22C" transform="rotate(257 52.7 111.7)"/>
   <ellipse cx="35.2" cy="85.6" rx="4.2" ry="2.5" fill="#E0C040" transform="rotate(299 35.2 85.6)"/>
   <ellipse cx="95.2" cy="89.7" rx="4.0" ry="1.8" fill="#B86A1E" transform="rotate(349 95.2 89.7)"/>
   <ellipse cx="68.9" cy="59.1" rx="3.6" ry="1.4" fill="#5A48D0" transform="rotate(320 68.9 59.1)"/>
   <ellipse cx="113.2" cy="104.4" rx="3.3" ry="2.1" fill="#8A3A7A" transform="rotate(443 113.2 104.4)"/>
   <ellipse cx="123.1" cy="93.6" rx="3.0" ry="2.0" fill="#8A3A7A" transform="rotate(399 123.1 93.6)"/>
   <ellipse cx="41.8" cy="74.0" rx="3.9" ry="2.8" fill="#4A3AB8" transform="rotate(300 41.8 74.0)"/>
   <ellipse cx="66.5" cy="62.4" rx="5.1" ry="1.3" fill="#C89A2A" transform="rotate(321 66.5 62.4)"/>
   <ellipse cx="86.0" cy="108.4" rx="4.0" ry="1.7" fill="#8A3A7A" transform="rotate(327 86.0 108.4)"/>
   <ellipse cx="38.2" cy="111.7" rx="2.6" ry="1.9" fill="#B86A1E" transform="rotate(285 38.2 111.7)"/>
   <ellipse cx="39.4" cy="105.3" rx="5.1" ry="2.8" fill="#C07028" transform="rotate(270 39.4 105.3)"/>
   <ellipse cx="29.7" cy="96.4" rx="3.6" ry="1.5" fill="#4A3AB8" transform="rotate(303 29.7 96.4)"/>
   <ellipse cx="118.7" cy="118.0" rx="6.5" ry="2.3" fill="#2A1A4A" transform="rotate(443 118.7 118.0)"/>
   <ellipse cx="72.7" cy="116.3" rx="3.6" ry="2.5" fill="#B86A1E" transform="rotate(269 72.7 116.3)"/>
   <ellipse cx="134.5" cy="97.1" rx="4.8" ry="2.9" fill="#6A2A8A" transform="rotate(448 134.5 97.1)"/>
   <ellipse cx="43.9" cy="106.7" rx="6.3" ry="2.3" fill="#3A1A5A" transform="rotate(275 43.9 106.7)"/>
   <ellipse cx="119.0" cy="115.5" rx="2.8" ry="1.9" fill="#3A1A5A" transform="rotate(430 119.0 115.5)"/>
   <ellipse cx="52.4" cy="119.4" rx="5.1" ry="1.4" fill="#D8B838" transform="rotate(263 52.4 119.4)"/>
   <ellipse cx="152.1" cy="105.2" rx="5.8" ry="2.1" fill="#C89A2A" transform="rotate(460 152.1 105.2)"/>
   <ellipse cx="107.7" cy="59.1" rx="6.6" ry="2.5" fill="#E0C040" transform="rotate(401 107.7 59.1)"/>
   <ellipse cx="35.5" cy="123.9" rx="2.8" ry="1.8" fill="#8A3A7A" transform="rotate(247 35.5 123.9)"/>
   <ellipse cx="43.5" cy="115.3" rx="5.8" ry="2.8" fill="#6A2A8A" transform="rotate(287 43.5 115.3)"/>
   <ellipse cx="126.4" cy="74.6" rx="4.1" ry="2.4" fill="#7A3A9A" transform="rotate(420 126.4 74.6)"/>
   <ellipse cx="129.7" cy="107.2" rx="2.6" ry="2.1" fill="#C07028" transform="rotate(409 129.7 107.2)"/>
   <ellipse cx="110.3" cy="84.5" rx="5.2" ry="1.3" fill="#C9A22C" transform="rotate(399 110.3 84.5)"/>
   <ellipse cx="149.7" cy="127.8" rx="4.0" ry="2.9" fill="#C89A2A" transform="rotate(467 149.7 127.8)"/>
   <ellipse cx="81.7" cy="74.6" rx="2.9" ry="2.6" fill="#D8B838" transform="rotate(328 81.7 74.6)"/>
   <ellipse cx="104.2" cy="76.0" rx="6.8" ry="1.4" fill="#B86A1E" transform="rotate(394 104.2 76.0)"/>
   <ellipse cx="112.7" cy="79.9" rx="4.2" ry="1.5" fill="#C9A22C" transform="rotate(397 112.7 79.9)"/>
   <ellipse cx="92.0" cy="62.1" rx="5.5" ry="2.0" fill="#7A3A9A" transform="rotate(383 92.0 62.1)"/>
   <ellipse cx="57.8" cy="74.8" rx="5.4" ry="2.6" fill="#B86A1E" transform="rotate(338 57.8 74.8)"/>
   <ellipse cx="61.1" cy="103.4" rx="5.1" ry="1.8" fill="#6A2A8A" transform="rotate(282 61.1 103.4)"/>
   <ellipse cx="87.6" cy="59.0" rx="5.7" ry="2.9" fill="#D0A830" transform="rotate(348 87.6 59.0)"/>
   <ellipse cx="47.5" cy="100.9" rx="6.7" ry="2.7" fill="#6A2A8A" transform="rotate(289 47.5 100.9)"/>
   <ellipse cx="92.1" cy="65.3" rx="6.3" ry="3.0" fill="#3A1A5A" transform="rotate(362 92.1 65.3)"/>
   <ellipse cx="73.5" cy="118.0" rx="2.7" ry="2.5" fill="#8A3A7A" transform="rotate(279 73.5 118.0)"/>
   <ellipse cx="52.2" cy="73.0" rx="5.4" ry="1.9" fill="#D0A830" transform="rotate(307 52.2 73.0)"/>
   <ellipse cx="116.4" cy="98.6" rx="6.1" ry="3.0" fill="#6A2A8A" transform="rotate(394 116.4 98.6)"/>
   <ellipse cx="40.8" cy="108.9" rx="6.1" ry="2.9" fill="#3A1A5A" transform="rotate(292 40.8 108.9)"/>
   <ellipse cx="48.7" cy="96.2" rx="5.7" ry="2.6" fill="#B86A1E" transform="rotate(302 48.7 96.2)"/>
   <ellipse cx="55.9" cy="120.5" rx="4.9" ry="2.9" fill="#B86A1E" transform="rotate(268 55.9 120.5)"/>
   <ellipse cx="115.7" cy="123.5" rx="2.9" ry="2.9" fill="#6A2A8A" transform="rotate(469 115.7 123.5)"/>
   <ellipse cx="45.2" cy="106.6" rx="6.5" ry="1.2" fill="#3A1A5A" transform="rotate(289 45.2 106.6)"/>
   <ellipse cx="112.1" cy="78.7" rx="6.7" ry="2.0" fill="#C07028" transform="rotate(398 112.1 78.7)"/>
   <ellipse cx="40.3" cy="90.0" rx="6.7" ry="1.4" fill="#C89A2A" transform="rotate(289 40.3 90.0)"/>
   <ellipse cx="80.3" cy="99.5" rx="4.9" ry="2.6" fill="#B86A1E" transform="rotate(329 80.3 99.5)"/>
   <ellipse cx="148.7" cy="110.1" rx="4.8" ry="1.3" fill="#7A3A9A" transform="rotate(433 148.7 110.1)"/>
   <ellipse cx="78.8" cy="85.3" rx="3.5" ry="2.8" fill="#C9A22C" transform="rotate(341 78.8 85.3)"/>
   <ellipse cx="39.7" cy="121.2" rx="6.0" ry="1.5" fill="#3A1A5A" transform="rotate(250 39.7 121.2)"/>
   <ellipse cx="91.5" cy="63.2" rx="5.6" ry="2.9" fill="#C89A2A" transform="rotate(363 91.5 63.2)"/>
   <ellipse cx="109.6" cy="119.1" rx="4.5" ry="2.2" fill="#6A2A8A" transform="rotate(465 109.6 119.1)"/>
   <ellipse cx="94.2" cy="92.0" rx="6.3" ry="2.2" fill="#8A3A7A" transform="rotate(363 94.2 92.0)"/>
   <ellipse cx="64.0" cy="63.8" rx="3.4" ry="2.7" fill="#4A3AB8" transform="rotate(360 64.0 63.8)"/>
   <ellipse cx="92.5" cy="69.3" rx="4.3" ry="1.4" fill="#B86A1E" transform="rotate(340 92.5 69.3)"/>
   <ellipse cx="68.2" cy="75.0" rx="4.8" ry="1.9" fill="#C9A22C" transform="rotate(351 68.2 75.0)"/>
   <ellipse cx="98.4" cy="73.9" rx="3.3" ry="2.9" fill="#3A1A5A" transform="rotate(370 98.4 73.9)"/>
   <ellipse cx="147.1" cy="112.6" rx="3.7" ry="2.1" fill="#E0C040" transform="rotate(425 147.1 112.6)"/>
   <ellipse cx="74.7" cy="61.3" rx="4.9" ry="1.4" fill="#E0C040" transform="rotate(343 74.7 61.3)"/>
   <ellipse cx="53.7" cy="121.4" rx="2.7" ry="1.5" fill="#3A1A5A" transform="rotate(242 53.7 121.4)"/>
   <ellipse cx="50.0" cy="78.1" rx="5.3" ry="1.4" fill="#5A48D0" transform="rotate(329 50.0 78.1)"/>
   <ellipse cx="42.4" cy="106.9" rx="5.7" ry="2.5" fill="#6A2A8A" transform="rotate(304 42.4 106.9)"/>
   <ellipse cx="35.6" cy="123.5" rx="4.9" ry="1.5" fill="#C07028" transform="rotate(251 35.6 123.5)"/>
   <ellipse cx="111.5" cy="71.8" rx="3.5" ry="2.2" fill="#D8B838" transform="rotate(390 111.5 71.8)"/>
   <ellipse cx="28.2" cy="100.0" rx="6.1" ry="2.8" fill="#C89A2A" transform="rotate(279 28.2 100.0)"/>
   <ellipse cx="50.4" cy="68.6" rx="6.0" ry="1.6" fill="#5A48D0" transform="rotate(303 50.4 68.6)"/>
   <ellipse cx="113.2" cy="113.8" rx="3.7" ry="1.4" fill="#3A1A5A" transform="rotate(454 113.2 113.8)"/>
   <ellipse cx="72.6" cy="62.8" rx="3.4" ry="2.3" fill="#5A48D0" transform="rotate(359 72.6 62.8)"/>
   <ellipse cx="38.9" cy="110.8" rx="6.6" ry="2.9" fill="#6A2A8A" transform="rotate(261 38.9 110.8)"/>
   <ellipse cx="89.4" cy="61.9" rx="7.0" ry="2.7" fill="#4A3AB8" transform="rotate(376 89.4 61.9)"/>
   <ellipse cx="87.4" cy="105.7" rx="5.3" ry="2.8" fill="#8A3A7A" transform="rotate(356 87.4 105.7)"/>
   <ellipse cx="67.2" cy="108.0" rx="6.3" ry="3.0" fill="#6A2A8A" transform="rotate(320 67.2 108.0)"/>
   <ellipse cx="69.8" cy="116.3" rx="2.8" ry="1.4" fill="#2A1A4A" transform="rotate(274 69.8 116.3)"/>
   <ellipse cx="78.2" cy="80.8" rx="5.2" ry="1.2" fill="#B86A1E" transform="rotate(355 78.2 80.8)"/>
   <ellipse cx="115.5" cy="108.6" rx="4.1" ry="1.9" fill="#2A1A4A" transform="rotate(449 115.5 108.6)"/>
   <ellipse cx="96.2" cy="98.8" rx="4.0" ry="1.4" fill="#3A1A5A" transform="rotate(398 96.2 98.8)"/>
   <ellipse cx="149.0" cy="102.5" rx="5.1" ry="1.5" fill="#E0C040" transform="rotate(439 149.0 102.5)"/>
   <ellipse cx="58.1" cy="70.2" rx="6.6" ry="2.5" fill="#7A3A9A" transform="rotate(342 58.1 70.2)"/>
   <ellipse cx="126.1" cy="99.7" rx="6.5" ry="2.5" fill="#6A2A8A" transform="rotate(436 126.1 99.7)"/>
   <ellipse cx="122.1" cy="93.5" rx="3.3" ry="2.6" fill="#3A1A5A" transform="rotate(403 122.1 93.5)"/>
   <ellipse cx="27.2" cy="107.6" rx="6.6" ry="1.3" fill="#C89A2A" transform="rotate(270 27.2 107.6)"/>
   <ellipse cx="125.2" cy="120.4" rx="5.5" ry="2.2" fill="#B86A1E" transform="rotate(453 125.2 120.4)"/>
   <ellipse cx="63.7" cy="58.2" rx="3.5" ry="1.4" fill="#C89A2A" transform="rotate(333 63.7 58.2)"/>
   <ellipse cx="94.4" cy="96.3" rx="5.8" ry="1.7" fill="#3A1A5A" transform="rotate(370 94.4 96.3)"/>
   <ellipse cx="57.9" cy="119.0" rx="2.5" ry="1.7" fill="#2A1A4A" transform="rotate(260 57.9 119.0)"/>
   <ellipse cx="62.7" cy="77.8" rx="6.9" ry="2.2" fill="#8A3A7A" transform="rotate(353 62.7 77.8)"/>
   <ellipse cx="115.6" cy="66.6" rx="5.0" ry="2.4" fill="#D0A830" transform="rotate(410 115.6 66.6)"/>
   <ellipse cx="63.8" cy="60.4" rx="4.6" ry="1.5" fill="#E0C040" transform="rotate(337 63.8 60.4)"/>
   <ellipse cx="95.2" cy="102.5" rx="4.4" ry="2.1" fill="#2A1A4A" transform="rotate(387 95.2 102.5)"/>
   <ellipse cx="72.1" cy="87.2" rx="3.7" ry="2.9" fill="#3A1A5A" transform="rotate(342 72.1 87.2)"/>
   <ellipse cx="99.0" cy="110.2" rx="5.1" ry="2.3" fill="#6A2A8A" transform="rotate(404 99.0 110.2)"/>
   <ellipse cx="98.8" cy="105.3" rx="5.9" ry="1.3" fill="#B86A1E" transform="rotate(421 98.8 105.3)"/>
   <ellipse cx="108.3" cy="118.8" rx="4.4" ry="2.1" fill="#6A2A8A" transform="rotate(472 108.3 118.8)"/>
   <ellipse cx="51.0" cy="89.0" rx="5.8" ry="2.0" fill="#C07028" transform="rotate(333 51.0 89.0)"/>
   <ellipse cx="134.2" cy="95.8" rx="2.7" ry="2.0" fill="#C9A22C" transform="rotate(404 134.2 95.8)"/>
   <ellipse cx="126.3" cy="106.8" rx="3.1" ry="2.0" fill="#B86A1E" transform="rotate(440 126.3 106.8)"/>
   <ellipse cx="83.0" cy="85.2" rx="5.6" ry="1.9" fill="#8A3A7A" transform="rotate(363 83.0 85.2)"/>
   <ellipse cx="111.3" cy="107.5" rx="5.8" ry="1.6" fill="#B86A1E" transform="rotate(403 111.3 107.5)"/>
   <ellipse cx="145.6" cy="107.1" rx="6.3" ry="1.7" fill="#4A3AB8" transform="rotate(443 145.6 107.1)"/>
   <ellipse cx="127.2" cy="80.0" rx="5.3" ry="2.6" fill="#B86A1E" transform="rotate(389 127.2 80.0)"/>
   <ellipse cx="38.5" cy="77.2" rx="6.5" ry="1.3" fill="#5A48D0" transform="rotate(288 38.5 77.2)"/>
   <ellipse cx="57.3" cy="88.9" rx="2.7" ry="1.6" fill="#D8B838" transform="rotate(304 57.3 88.9)"/>
   <ellipse cx="137.1" cy="79.5" rx="5.0" ry="2.3" fill="#5A48D0" transform="rotate(404 137.1 79.5)"/>
   <ellipse cx="86.0" cy="88.2" rx="4.7" ry="1.4" fill="#B86A1E" transform="rotate(374 86.0 88.2)"/>
   <ellipse cx="126.9" cy="97.1" rx="5.3" ry="2.6" fill="#C07028" transform="rotate(406 126.9 97.1)"/>
   <ellipse cx="79.4" cy="86.2" rx="4.2" ry="2.4" fill="#6A2A8A" transform="rotate(369 79.4 86.2)"/>
   <ellipse cx="60.3" cy="78.9" rx="6.2" ry="1.5" fill="#3A1A5A" transform="rotate(333 60.3 78.9)"/>
   <ellipse cx="100.8" cy="75.9" rx="2.9" ry="1.3" fill="#6A2A8A" transform="rotate(379 100.8 75.9)"/>
   <ellipse cx="85.4" cy="64.7" rx="6.2" ry="1.2" fill="#6A2A8A" transform="rotate(348 85.4 64.7)"/>
   <ellipse cx="139.3" cy="111.7" rx="3.9" ry="2.5" fill="#3A1A5A" transform="rotate(451 139.3 111.7)"/>
   <ellipse cx="70.3" cy="100.2" rx="5.5" ry="1.8" fill="#B86A1E" transform="rotate(337 70.3 100.2)"/>
   <ellipse cx="62.7" cy="83.2" rx="6.6" ry="2.9" fill="#D8B838" transform="rotate(346 62.7 83.2)"/>
   <ellipse cx="75.7" cy="61.6" rx="4.6" ry="1.6" fill="#7A3A9A" transform="rotate(371 75.7 61.6)"/>
   <ellipse cx="122.4" cy="86.0" rx="4.1" ry="1.9" fill="#C9A22C" transform="rotate(399 122.4 86.0)"/>
   <ellipse cx="73.6" cy="80.5" rx="5.8" ry="1.9" fill="#B86A1E" transform="rotate(334 73.6 80.5)"/>
   <ellipse cx="40.8" cy="100.7" rx="3.3" ry="2.6" fill="#B86A1E" transform="rotate(311 40.8 100.7)"/>
   <ellipse cx="79.1" cy="109.7" rx="2.8" ry="1.5" fill="#8A3A7A" transform="rotate(307 79.1 109.7)"/>
   <ellipse cx="27.8" cy="124.3" rx="2.8" ry="2.2" fill="#E0C040" transform="rotate(280 27.8 124.3)"/>
   <ellipse cx="67.6" cy="116.7" rx="6.5" ry="1.4" fill="#3A1A5A" transform="rotate(284 67.6 116.7)"/>
   <ellipse cx="34.4" cy="100.4" rx="4.4" ry="2.5" fill="#C89A2A" transform="rotate(289 34.4 100.4)"/>
   <ellipse cx="126.9" cy="113.2" rx="4.3" ry="1.8" fill="#8A3A7A" transform="rotate(464 126.9 113.2)"/>
   <ellipse cx="114.6" cy="80.7" rx="6.1" ry="1.3" fill="#D8B838" transform="rotate(400 114.6 80.7)"/>
   <ellipse cx="30.7" cy="119.3" rx="4.1" ry="1.2" fill="#C89A2A" transform="rotate(264 30.7 119.3)"/>
   <ellipse cx="43.3" cy="112.6" rx="5.4" ry="2.1" fill="#D8B838" transform="rotate(289 43.3 112.6)"/>
   <ellipse cx="125.9" cy="97.7" rx="6.6" ry="1.6" fill="#8A3A7A" transform="rotate(403 125.9 97.7)"/>
   <ellipse cx="113.0" cy="70.5" rx="3.4" ry="2.0" fill="#6A2A8A" transform="rotate(376 113.0 70.5)"/>
   <ellipse cx="106.7" cy="120.5" rx="5.8" ry="1.7" fill="#B86A1E" transform="rotate(436 106.7 120.5)"/>
   <ellipse cx="150.9" cy="111.9" rx="2.6" ry="2.1" fill="#E0C040" transform="rotate(458 150.9 111.9)"/>
   <ellipse cx="69.9" cy="95.2" rx="3.5" ry="1.6" fill="#B86A1E" transform="rotate(334 69.9 95.2)"/>
   <ellipse cx="98.7" cy="88.9" rx="6.5" ry="1.9" fill="#6A2A8A" transform="rotate(399 98.7 88.9)"/>
   <ellipse cx="140.8" cy="116.4" rx="5.0" ry="2.7" fill="#C07028" transform="rotate(446 140.8 116.4)"/>
   <ellipse cx="67.0" cy="58.6" rx="5.0" ry="2.9" fill="#C89A2A" transform="rotate(340 67.0 58.6)"/>
   <ellipse cx="74.1" cy="109.6" rx="6.1" ry="1.9" fill="#6A2A8A" transform="rotate(306 74.1 109.6)"/>
   <ellipse cx="90.2" cy="84.1" rx="5.5" ry="1.6" fill="#C9A22C" transform="rotate(339 90.2 84.1)"/>
   <ellipse cx="84.4" cy="78.8" rx="3.6" ry="2.0" fill="#C07028" transform="rotate(373 84.4 78.8)"/>
   <ellipse cx="71.6" cy="63.8" rx="3.7" ry="2.8" fill="#5A48D0" transform="rotate(344 71.6 63.8)"/>
   <ellipse cx="118.3" cy="61.0" rx="4.8" ry="1.3" fill="#7A3A9A" transform="rotate(391 118.3 61.0)"/>
   <ellipse cx="60.5" cy="105.8" rx="6.2" ry="1.3" fill="#6A2A8A" transform="rotate(285 60.5 105.8)"/>
   <ellipse cx="103.5" cy="103.1" rx="5.6" ry="1.3" fill="#2A1A4A" transform="rotate(415 103.5 103.1)"/>
   <ellipse cx="95.4" cy="72.6" rx="6.1" ry="2.0" fill="#C9A22C" transform="rotate(389 95.4 72.6)"/>
   <ellipse cx="28.9" cy="110.1" rx="2.7" ry="1.9" fill="#5A48D0" transform="rotate(279 28.9 110.1)"/>
   <ellipse cx="153.1" cy="117.7" rx="3.9" ry="1.3" fill="#7A3A9A" transform="rotate(439 153.1 117.7)"/>
   <ellipse cx="82.0" cy="63.8" rx="2.8" ry="1.5" fill="#7A3A9A" transform="rotate(362 82.0 63.8)"/>
   <ellipse cx="121.0" cy="72.5" rx="5.4" ry="1.2" fill="#D0A830" transform="rotate(389 121.0 72.5)"/>
   <ellipse cx="110.3" cy="94.7" rx="3.0" ry="2.6" fill="#8A3A7A" transform="rotate(419 110.3 94.7)"/>
   <ellipse cx="140.5" cy="98.6" rx="3.2" ry="2.3" fill="#4A3AB8" transform="rotate(450 140.5 98.6)"/>
   <ellipse cx="137.3" cy="77.6" rx="5.0" ry="1.4" fill="#E0C040" transform="rotate(394 137.3 77.6)"/>
   <ellipse cx="78.6" cy="98.1" rx="6.8" ry="2.2" fill="#B86A1E" transform="rotate(347 78.6 98.1)"/>
   <ellipse cx="55.3" cy="69.3" rx="3.0" ry="2.3" fill="#D0A830" transform="rotate(308 55.3 69.3)"/>
   <ellipse cx="101.0" cy="93.2" rx="4.3" ry="2.7" fill="#6A2A8A" transform="rotate(390 101.0 93.2)"/>
   <ellipse cx="56.2" cy="114.5" rx="6.9" ry="2.0" fill="#6A2A8A" transform="rotate(292 56.2 114.5)"/>
   <ellipse cx="57.1" cy="68.3" rx="3.1" ry="1.6" fill="#4A3AB8" transform="rotate(311 57.1 68.3)"/>
   <ellipse cx="116.8" cy="82.9" rx="5.3" ry="2.5" fill="#8A3A7A" transform="rotate(404 116.8 82.9)"/>
   <ellipse cx="53.7" cy="72.0" rx="5.5" ry="2.3" fill="#5A48D0" transform="rotate(300 53.7 72.0)"/>
   <ellipse cx="66.6" cy="86.7" rx="4.5" ry="2.2" fill="#3A1A5A" transform="rotate(312 66.6 86.7)"/>
   <ellipse cx="68.3" cy="88.8" rx="5.3" ry="1.5" fill="#C9A22C" transform="rotate(340 68.3 88.8)"/>
   <ellipse cx="136.8" cy="110.8" rx="5.3" ry="2.1" fill="#6A2A8A" transform="rotate(444 136.8 110.8)"/>
   <ellipse cx="33.2" cy="87.4" rx="5.7" ry="2.9" fill="#C89A2A" transform="rotate(304 33.2 87.4)"/>
   <ellipse cx="34.5" cy="123.0" rx="2.9" ry="1.6" fill="#C07028" transform="rotate(270 34.5 123.0)"/>
   <ellipse cx="112.6" cy="89.5" rx="4.1" ry="2.0" fill="#C07028" transform="rotate(380 112.6 89.5)"/>
   <ellipse cx="114.1" cy="121.2" rx="4.9" ry="2.2" fill="#8A3A7A" transform="rotate(457 114.1 121.2)"/>
   <ellipse cx="42.5" cy="76.3" rx="5.2" ry="1.4" fill="#7A3A9A" transform="rotate(330 42.5 76.3)"/>
   <ellipse cx="46.5" cy="72.9" rx="5.9" ry="1.9" fill="#5A48D0" transform="rotate(301 46.5 72.9)"/>
   <ellipse cx="108.0" cy="63.3" rx="2.6" ry="1.5" fill="#E0C040" transform="rotate(404 108.0 63.3)"/>
   <ellipse cx="142.1" cy="116.7" rx="5.9" ry="2.7" fill="#6A2A8A" transform="rotate(467 142.1 116.7)"/>
   <ellipse cx="108.9" cy="70.5" rx="2.6" ry="1.6" fill="#C07028" transform="rotate(381 108.9 70.5)"/>
   <ellipse cx="49.0" cy="105.7" rx="4.3" ry="1.8" fill="#D8B838" transform="rotate(271 49.0 105.7)"/>
   <ellipse cx="39.0" cy="79.1" rx="5.4" ry="1.3" fill="#D0A830" transform="rotate(318 39.0 79.1)"/>
   <ellipse cx="27.4" cy="97.7" rx="3.0" ry="1.8" fill="#4A3AB8" transform="rotate(309 27.4 97.7)"/>
   <ellipse cx="137.8" cy="112.4" rx="5.9" ry="2.1" fill="#8A3A7A" transform="rotate(467 137.8 112.4)"/>
   <ellipse cx="144.6" cy="95.6" rx="6.2" ry="1.4" fill="#E0C040" transform="rotate(408 144.6 95.6)"/>
   <ellipse cx="126.9" cy="117.4" rx="4.4" ry="2.8" fill="#D8B838" transform="rotate(438 126.9 117.4)"/>
   <ellipse cx="31.9" cy="117.7" rx="5.8" ry="2.3" fill="#E0C040" transform="rotate(284 31.9 117.7)"/>
   <ellipse cx="56.3" cy="79.5" rx="3.6" ry="2.7" fill="#C9A22C" transform="rotate(308 56.3 79.5)"/>
   <ellipse cx="150.8" cy="101.4" rx="5.6" ry="2.1" fill="#E0C040" transform="rotate(421 150.8 101.4)"/>
   <ellipse cx="62.2" cy="86.5" rx="6.5" ry="3.0" fill="#B86A1E" transform="rotate(333 62.2 86.5)"/>
   <ellipse cx="127.4" cy="108.0" rx="4.4" ry="2.6" fill="#D8B838" transform="rotate(420 127.4 108.0)"/>
   <ellipse cx="126.0" cy="86.5" rx="2.9" ry="2.6" fill="#C9A22C" transform="rotate(390 126.0 86.5)"/>
   <ellipse cx="96.6" cy="55.6" rx="3.8" ry="2.5" fill="#D0A830" transform="rotate(344 96.6 55.6)"/>
   <ellipse cx="48.1" cy="100.7" rx="6.2" ry="1.9" fill="#8A3A7A" transform="rotate(288 48.1 100.7)"/>
   <ellipse cx="93.2" cy="103.4" rx="4.5" ry="1.8" fill="#3A1A5A" transform="rotate(368 93.2 103.4)"/>
   <ellipse cx="33.3" cy="100.2" rx="6.5" ry="1.6" fill="#E0C040" transform="rotate(307 33.3 100.2)"/>
   <ellipse cx="99.7" cy="105.0" rx="6.3" ry="1.8" fill="#B86A1E" transform="rotate(397 99.7 105.0)"/>
   <ellipse cx="32.1" cy="93.3" rx="3.4" ry="2.3" fill="#4A3AB8" transform="rotate(280 32.1 93.3)"/>
   <ellipse cx="105.1" cy="115.1" rx="3.9" ry="2.7" fill="#3A1A5A" transform="rotate(458 105.1 115.1)"/>
   <ellipse cx="57.8" cy="88.7" rx="4.0" ry="2.9" fill="#B86A1E" transform="rotate(329 57.8 88.7)"/>
   <ellipse cx="80.1" cy="92.2" rx="3.0" ry="2.4" fill="#B86A1E" transform="rotate(332 80.1 92.2)"/>
   <ellipse cx="120.8" cy="85.3" rx="6.1" ry="1.9" fill="#6A2A8A" transform="rotate(412 120.8 85.3)"/>
   <ellipse cx="137.9" cy="107.3" rx="6.9" ry="2.8" fill="#B86A1E" transform="rotate(420 137.9 107.3)"/>
   <ellipse cx="67.6" cy="104.6" rx="4.6" ry="1.3" fill="#3A1A5A" transform="rotate(327 67.6 104.6)"/>
   <ellipse cx="25.7" cy="113.3" rx="5.2" ry="1.7" fill="#D0A830" transform="rotate(263 25.7 113.3)"/>
   <ellipse cx="106.9" cy="108.8" rx="6.9" ry="1.5" fill="#B86A1E" transform="rotate(404 106.9 108.8)"/>
   <ellipse cx="98.8" cy="109.5" rx="6.9" ry="1.3" fill="#6A2A8A" transform="rotate(404 98.8 109.5)"/>
   <ellipse cx="120.0" cy="92.6" rx="2.8" ry="1.3" fill="#8A3A7A" transform="rotate(423 120.0 92.6)"/>
   <ellipse cx="126.0" cy="113.6" rx="6.0" ry="2.1" fill="#8A3A7A" transform="rotate(441 126.0 113.6)"/>
   <ellipse cx="139.3" cy="99.3" rx="5.8" ry="2.2" fill="#D8B838" transform="rotate(433 139.3 99.3)"/>
   <ellipse cx="107.5" cy="105.4" rx="3.6" ry="2.0" fill="#2A1A4A" transform="rotate(427 107.5 105.4)"/>
   <ellipse cx="137.5" cy="87.2" rx="3.7" ry="2.2" fill="#5A48D0" transform="rotate(434 137.5 87.2)"/>
   <ellipse cx="100.4" cy="87.0" rx="5.2" ry="2.5" fill="#6A2A8A" transform="rotate(384 100.4 87.0)"/>
   <ellipse cx="116.4" cy="111.4" rx="5.2" ry="2.3" fill="#6A2A8A" transform="rotate(449 116.4 111.4)"/>
   <ellipse cx="89.0" cy="63.2" rx="2.8" ry="2.8" fill="#D0A830" transform="rotate(364 89.0 63.2)"/>
   <ellipse cx="97.1" cy="61.3" rx="5.3" ry="1.3" fill="#5A48D0" transform="rotate(365 97.1 61.3)"/>
   <ellipse cx="125.8" cy="72.8" rx="4.9" ry="1.7" fill="#C89A2A" transform="rotate(403 125.8 72.8)"/>
   <ellipse cx="29.0" cy="110.6" rx="4.2" ry="1.6" fill="#5A48D0" transform="rotate(278 29.0 110.6)"/>
   <ellipse cx="115.1" cy="75.8" rx="2.8" ry="1.9" fill="#8A3A7A" transform="rotate(385 115.1 75.8)"/>
   <ellipse cx="34.3" cy="83.3" rx="3.1" ry="2.6" fill="#D0A830" transform="rotate(309 34.3 83.3)"/>
   <ellipse cx="33.8" cy="102.2" rx="5.9" ry="1.3" fill="#4A3AB8" transform="rotate(275 33.8 102.2)"/>
   <ellipse cx="113.9" cy="113.7" rx="5.0" ry="2.0" fill="#2A1A4A" transform="rotate(459 113.9 113.7)"/>
   <ellipse cx="142.9" cy="122.7" rx="5.9" ry="2.5" fill="#3A1A5A" transform="rotate(440 142.9 122.7)"/>
   <ellipse cx="51.1" cy="87.0" rx="4.4" ry="1.4" fill="#B86A1E" transform="rotate(297 51.1 87.0)"/>
   <ellipse cx="48.9" cy="68.8" rx="3.5" ry="1.5" fill="#4A3AB8" transform="rotate(326 48.9 68.8)"/>
   <ellipse cx="144.6" cy="127.4" rx="5.6" ry="2.8" fill="#4A3AB8" transform="rotate(462 144.6 127.4)"/>
   <ellipse cx="132.5" cy="108.9" rx="6.7" ry="1.6" fill="#8A3A7A" transform="rotate(430 132.5 108.9)"/>
   </g>
   <circle cx="88.3" cy="119.5" r="68.5" fill="none" stroke="#6E60F0" stroke-width="2"/>
  </g>
 </g>
</svg>
<div class="a" style="left:194px;top:272px;width:227px;height:138px;border:2px solid #FFFFFF;border-radius:9px"></div>

<!-- image 2 -->
<svg class="a" style="left:428px;top:272px" width="227" height="138" viewBox="0 0 227 138">
 <defs>
  <clipPath id="c2"><rect x="0" y="0" width="227" height="138" rx="9"/></clipPath>
  <linearGradient id="wall2" x1="0" y1="0" x2="1" y2="0"><stop offset="0" stop-color="#D6D9DF"/><stop offset="0.5" stop-color="#D0D3D9"/><stop offset="1" stop-color="#C6C9D0"/></linearGradient>
  <linearGradient id="scr2" x1="0" y1="0" x2="1" y2="0"><stop offset="0" stop-color="#13202E"/><stop offset="1" stop-color="#1A2A3A"/></linearGradient>
  <filter id="b2"><feGaussianBlur stdDeviation="0.6"/></filter>
 </defs>
 <g clip-path="url(#c2)">
  <rect width="227" height="138" fill="url(#wall2)"/>
  <!-- left side -->
  <rect x="0" y="0" width="14" height="62" fill="#1F2631"/>
  <rect x="3" y="30" width="9" height="28" fill="#5A6270"/>
  <rect x="4" y="26" width="7" height="6" fill="#C8CCD2"/>
  <rect x="0" y="62" width="22" height="12" fill="#5A4A40"/>
  <rect x="14" y="0" width="5" height="70" fill="#E6E8EC"/>
  <rect x="19" y="0" width="23" height="70" fill="#D3D6DC"/>
  <rect x="42" y="0" width="32" height="72" fill="#EEF0F3"/>
  <rect x="54" y="0" width="1.5" height="72" fill="#DADDE2"/>
  <rect x="64" y="0" width="1.5" height="72" fill="#E0E3E7"/>
  <!-- monitor -->
  <rect x="72" y="0" width="66" height="13" fill="#F0F1F4"/>
  <rect x="73" y="12" width="66" height="52" fill="#DFE2E7"/>
  <rect x="72" y="12" width="2.5" height="52" fill="#1A2029"/>
  <rect x="135" y="0" width="6" height="47" fill="#121821"/>
  <rect x="87" y="5" width="30" height="18" fill="#5C646E" filter="url(#b2)"/>
  <rect x="90" y="11" width="10" height="7" fill="#2E3844"/>
  <rect x="104" y="6" width="10" height="9" fill="#8C8290"/>
  <rect x="99" y="0" width="14" height="5" fill="#2A3038"/>
  <path d="M92 30h30M92 36h24M94 44h20" stroke="#CDD0D6" stroke-width="1.2"/>
  <!-- lamp -->
  <path d="M165 1 H202 Q196 14 176 16 Q164 14 165 1 Z" fill="#A6ABB3"/>
  <path d="M168 2 H196 Q188 8 172 9 Z" fill="#BFC3CA"/>
  <!-- back desk + items -->
  <rect x="0" y="70" width="72" height="17" fill="#D9DCE1"/>
  <rect x="13" y="70" width="20" height="14" rx="1" fill="#F3F4F6"/>
  <path d="M13 73 Q8 76 13 80" stroke="#E0E2E6" stroke-width="2" fill="none"/>
  <path d="M35 70 Q45 64 57 70 L57 78 L35 78 Z" fill="#1C1E23"/>
  <rect x="58" y="55" width="11" height="9" rx="3" fill="#5E8E2E"/>
  <rect x="59" y="63" width="10" height="15" fill="#E4E5E8"/>
  <!-- dark desk -->
  <path d="M0 86 L74 81 L74 100 L33 116 L42 124 L0 98 Z" fill="#464C58"/>
  <path d="M0 98 L42 124 L42 127 L0 101 Z" fill="#262A32"/>
  <path d="M24 96 L62 95 L63 103 L25 104 Z" fill="#CDD1D6"/>
  <path d="M25 104 L63 103 L63 106 L25 107 Z" fill="#15171B"/>
  <!-- under desk -->
  <path d="M0 101 L42 127 L42 138 L0 138 Z" fill="#6E5C4C"/>
  <rect x="14" y="121" width="8" height="10" fill="#26221F"/>
  <path d="M9 104 L4 134" stroke="#2A303A" stroke-width="3"/>
  <!-- front white desk -->
  <path d="M40 121 L144 132 L178 137 L178 138 L40 138 Z" fill="#E4E6EA"/>
  <!-- right desk -->
  <path d="M157 88 L227 98 L227 116 L178 137 L144 132 L157 104 Z" fill="#DDE0E5"/>
  <path d="M227 116 L179 138 L227 138 Z" fill="#646A78"/><path d="M227 114 L177 137 L179 138 L227 116 Z" fill="#F0F2F5"/>
  <!-- power strip -->
  <path d="M201 46 L211 47 L203 95 L193 94 Z" fill="#E8EAEE"/>
  <circle cx="204" cy="58" r="2.6" fill="#80848C"/><circle cx="202" cy="69" r="2.6" fill="#80848C"/><circle cx="200" cy="80" r="2.6" fill="#80848C"/><circle cx="198.5" cy="89" r="2.4" fill="#80848C"/>
  <ellipse cx="195.5" cy="97" rx="9" ry="3.5" fill="#8C9098"/>
  <!-- laptop -->
  <path d="M77 45.5 L158.5 45.5 L158 106 L71 101 Z" fill="#0D131B"/>
  <path d="M81 50 L155 50 L155 102 L76 98 Z" fill="url(#scr2)"/>
  <path d="M143 50 L155 50 L155 102 L143 101 Z" fill="#BCC8D6"/>
  <path d="M128 92 Q140 84 155 88 L155 102 L124 101 Z" fill="#C97A5C"/>
  <path d="M118 96 Q124 90 132 92 L130 101 L114 100 Z" fill="#3C5C8A"/>
  <g stroke-width="1.1" filter="url(#b2)">
   <path d="M86 56h18M86 60h26M88 64h16M88 68h22M86 72h18M90 76h20M86 80h14M90 84h20M86 88h24" stroke="#6FB070"/>
   <path d="M110 56h22M110 62h16M112 68h20M110 74h14M112 80h18" stroke="#9CC0D8"/>
   <path d="M83 54v42" stroke="#C05080" stroke-width="1.4"/>
  </g>
  <path d="M71 101 L158 104 L144 132 L33 117 Z" fill="#C7CAD0"/>
  <path d="M74 103 L143 105 L140 114 L66 110 Z" fill="#2B2E35"/>
  <path d="M90 116 L125 120 L122 127 L86 123 Z" fill="#BDC0C6"/>
  <path d="M33 117 L144 132 L143 135 L32 120 Z" fill="#9CA0A8"/>
 </g>
</svg>
<div class="a" style="left:428px;top:272px;width:227px;height:138px;border:2px solid #FFFFFF;border-radius:9px"></div>

<!-- image 3 -->
<svg class="a" style="left:662px;top:272px" width="227" height="138" viewBox="0 0 227 138">
 <defs>
  <clipPath id="c3"><rect x="0" y="0" width="227" height="138" rx="9"/></clipPath>
  <linearGradient id="shade" x1="0" y1="0" x2="0" y2="1"><stop offset="0" stop-color="#F2F2F2"/><stop offset="1" stop-color="#B5B5B5"/></linearGradient>
  <linearGradient id="beamU" x1="0" y1="0" x2="0" y2="1"><stop offset="0" stop-color="#C0C0C0"/><stop offset="0.6" stop-color="#C8C8C8"/><stop offset="1" stop-color="#7A7A7A"/></linearGradient>
  <linearGradient id="beamD" x1="0" y1="0" x2="0" y2="1"><stop offset="0" stop-color="#D8D8D8"/><stop offset="0.4" stop-color="#8E8E8E"/><stop offset="1" stop-color="#2C2C2C"/></linearGradient>
  <linearGradient id="wall3" x1="0" y1="0" x2="1" y2="0"><stop offset="0" stop-color="#2E2E2E"/><stop offset="1" stop-color="#3A3A3A"/></linearGradient>
  <filter id="blur3" x="-50%" y="-50%" width="200%" height="200%"><feGaussianBlur stdDeviation="3"/></filter>
  <filter id="blur1"><feGaussianBlur stdDeviation="0.45"/></filter>
 </defs>
 <g clip-path="url(#c3)">
  <rect width="227" height="138" fill="#2A2A2A"/>
  <rect x="145" y="0" width="82" height="138" fill="#2C2C2C"/>
  <path d="M132 18 L145 14 L145 138 L132 138 Z" fill="#262626"/>
  <path d="M102 0 L132 0 L132 19 Z" fill="#E2E2E2"/>
  <path d="M154 0 H174 L170 34 H160 Z" fill="url(#beamU)" filter="url(#blur3)"/>
  <path d="M157 37 H171 L173 58 L168 82 H160 L154 58 Z" fill="url(#beamD)" filter="url(#blur3)"/>
  <path d="M175 13 H188 L194 36 H163 Z" fill="url(#shade)"/>
  <ellipse cx="178.5" cy="36.5" rx="15" ry="3.8" fill="#E0E0E0"/>
  <rect x="177" y="33.5" width="2.5" height="6" fill="#222"/>
  <ellipse cx="196" cy="51.5" rx="3.5" ry="1.8" fill="#BEBEBE"/>
  <path d="M195.5 53 L194 78" stroke="#4A4A4A" stroke-width="1.2"/>
  <g fill="#D0D0D0" filter="url(#blur1)">
   <rect x="27" y="4" width="4" height="3"/><rect x="27" y="10" width="4" height="3"/><rect x="27" y="16" width="4" height="3"/><rect x="27" y="22" width="4" height="3"/>
   <rect x="27" y="28" width="3" height="3" fill="#999"/><rect x="27" y="33" width="4" height="3"/><rect x="27" y="38" width="3" height="3" fill="#999"/>
  </g>
  <g stroke="#BDBDBD" stroke-width="0.9" fill="none" filter="url(#blur1)">
   <path d="M33 5l4 1M33 11l3 1M33 17l6 2M33 23l3 1M33 29l6 2M33 34l9 3M33 39l8 3"/>
  </g>
  <g stroke-width="1.2" fill="none">
   <path d="M65.2 4.0l45.0 16.2" stroke="#777777" stroke-dasharray="2.2 0.8 3 1 1.5 0.7 4 1.2"/>
   <path d="M65.5 11.0l10.0 3.6" stroke="#CFCFCF" stroke-dasharray="2.2 0.8 3 1 1.5 0.7 4 1.2"/>
   <path d="M69.9 20.0l14.0 5.0" stroke="#CFCFCF" stroke-dasharray="2.2 0.8 3 1 1.5 0.7 4 1.2"/>
   <path d="M66.2 25.0l28.0 10.1" stroke="#CFCFCF" stroke-dasharray="2.2 0.8 3 1 1.5 0.7 4 1.2"/>
   <path d="M74.5 32.0l55.0 19.8" stroke="#CFCFCF" stroke-dasharray="2.2 0.8 3 1 1.5 0.7 4 1.2"/>
   <path d="M78.7 37.0l55.0 19.8" stroke="#CFCFCF" stroke-dasharray="2.2 0.8 3 1 1.5 0.7 4 1.2"/>
   <path d="M83.2 46.0l14.0 5.0" stroke="#777777" stroke-dasharray="2.2 0.8 3 1 1.5 0.7 4 1.2"/>
   <path d="M87.6 55.0l10.0 3.6" stroke="#CFCFCF" stroke-dasharray="2.2 0.8 3 1 1.5 0.7 4 1.2"/>
   <path d="M89.9 62.0l10.0 3.6" stroke="#777777" stroke-dasharray="2.2 0.8 3 1 1.5 0.7 4 1.2"/>
   <path d="M84.1 67.0l20.0 7.2" stroke="#CFCFCF" stroke-dasharray="2.2 0.8 3 1 1.5 0.7 4 1.2"/>
   <path d="M88.4 72.5l14.0 5.0" stroke="#CFCFCF" stroke-dasharray="2.2 0.8 3 1 1.5 0.7 4 1.2"/>
   <path d="M88.8 81.5l20.0 7.2" stroke="#CFCFCF" stroke-dasharray="2.2 0.8 3 1 1.5 0.7 4 1.2"/>
   <path d="M87.2 90.5l28.0 10.1" stroke="#CFCFCF" stroke-dasharray="2.2 0.8 3 1 1.5 0.7 4 1.2"/>
   <path d="M81.7 99.5l14.0 5.0" stroke="#CFCFCF" stroke-dasharray="2.2 0.8 3 1 1.5 0.7 4 1.2"/>
   <path d="M80.1 108.5l28.0 10.1" stroke="#CFCFCF" stroke-dasharray="2.2 0.8 3 1 1.5 0.7 4 1.2"/>
   <path d="M84.5 117.5l53.5 19.3" stroke="#777777" stroke-dasharray="2.2 0.8 3 1 1.5 0.7 4 1.2"/>
   <path d="M78.8 124.5l59.2 21.3" stroke="#CFCFCF" stroke-dasharray="2.2 0.8 3 1 1.5 0.7 4 1.2"/>
  </g>
  <g stroke="#4A4A4A" stroke-width="0.8" fill="none">
   <path d="M60 4v124" stroke="#3A3A3A" stroke-dasharray="1 5"/>
   <path d="M115 124L100 138M135 124L118 138M155 126L136 138M175 128L156 138M195 130L178 138M212 132L198 138"/>
   <path d="M100 118L215 128"/>
  </g>
 </g>
</svg>
<div class="a" style="left:662px;top:272px;width:227px;height:138px;border:2px solid #FFFFFF;border-radius:9px"></div>

<!-- stats -->
<div class="t" style="left:203px;top:433.5px;font-size:24.8px;font-weight:bold;color:#FFFFFF;letter-spacing:0.5px">470</div>
<div class="t" style="left:205px;top:469.5px;font-size:18.5px;letter-spacing:-0.55px;color:#8CD24A">Your Title #01</div>
<div class="t" style="left:205px;top:490.3px;font-size:11.8px;color:#FFFFFF;line-height:17.6px;letter-spacing:-0.25px"><b style="letter-spacing:-0.9px;font-size:11.6px">Lorem Ipsum</b> is simply<br>dummy text of the printing and<br>typesetting</div>
<div class="t" style="left:431px;top:433.5px;font-size:24.8px;font-weight:bold;color:#FFFFFF;letter-spacing:0.2px">17+</div>
<div class="t" style="left:432px;top:469.5px;font-size:18.5px;letter-spacing:-0.55px;color:#5CC387">Your Title #01</div>
<div class="t" style="left:432px;top:490.3px;font-size:11.8px;color:#FFFFFF;line-height:17.6px;letter-spacing:-0.25px"><b style="letter-spacing:-0.9px;font-size:11.6px">Lorem Ipsum</b> is simply<br>dummy text of the printing and<br>typesetting</div>
<div class="t" style="left:665.5px;top:433.5px;font-size:24.8px;font-weight:bold;color:#FFFFFF;letter-spacing:-0.3px">14K</div>
<div class="t" style="left:666px;top:469.5px;font-size:18.5px;letter-spacing:-0.55px;color:#2EB3C8">Your Title #01</div>
<div class="t" style="left:666px;top:490.3px;font-size:11.8px;color:#FFFFFF;line-height:17.6px;letter-spacing:-0.25px"><b style="letter-spacing:-0.9px;font-size:11.6px">Lorem Ipsum</b> is simply<br>dummy text of the printing and<br>typesetting</div>

<div class="a bl"></div><div class="a br"></div><div class="a bb"></div>
</body></html>
